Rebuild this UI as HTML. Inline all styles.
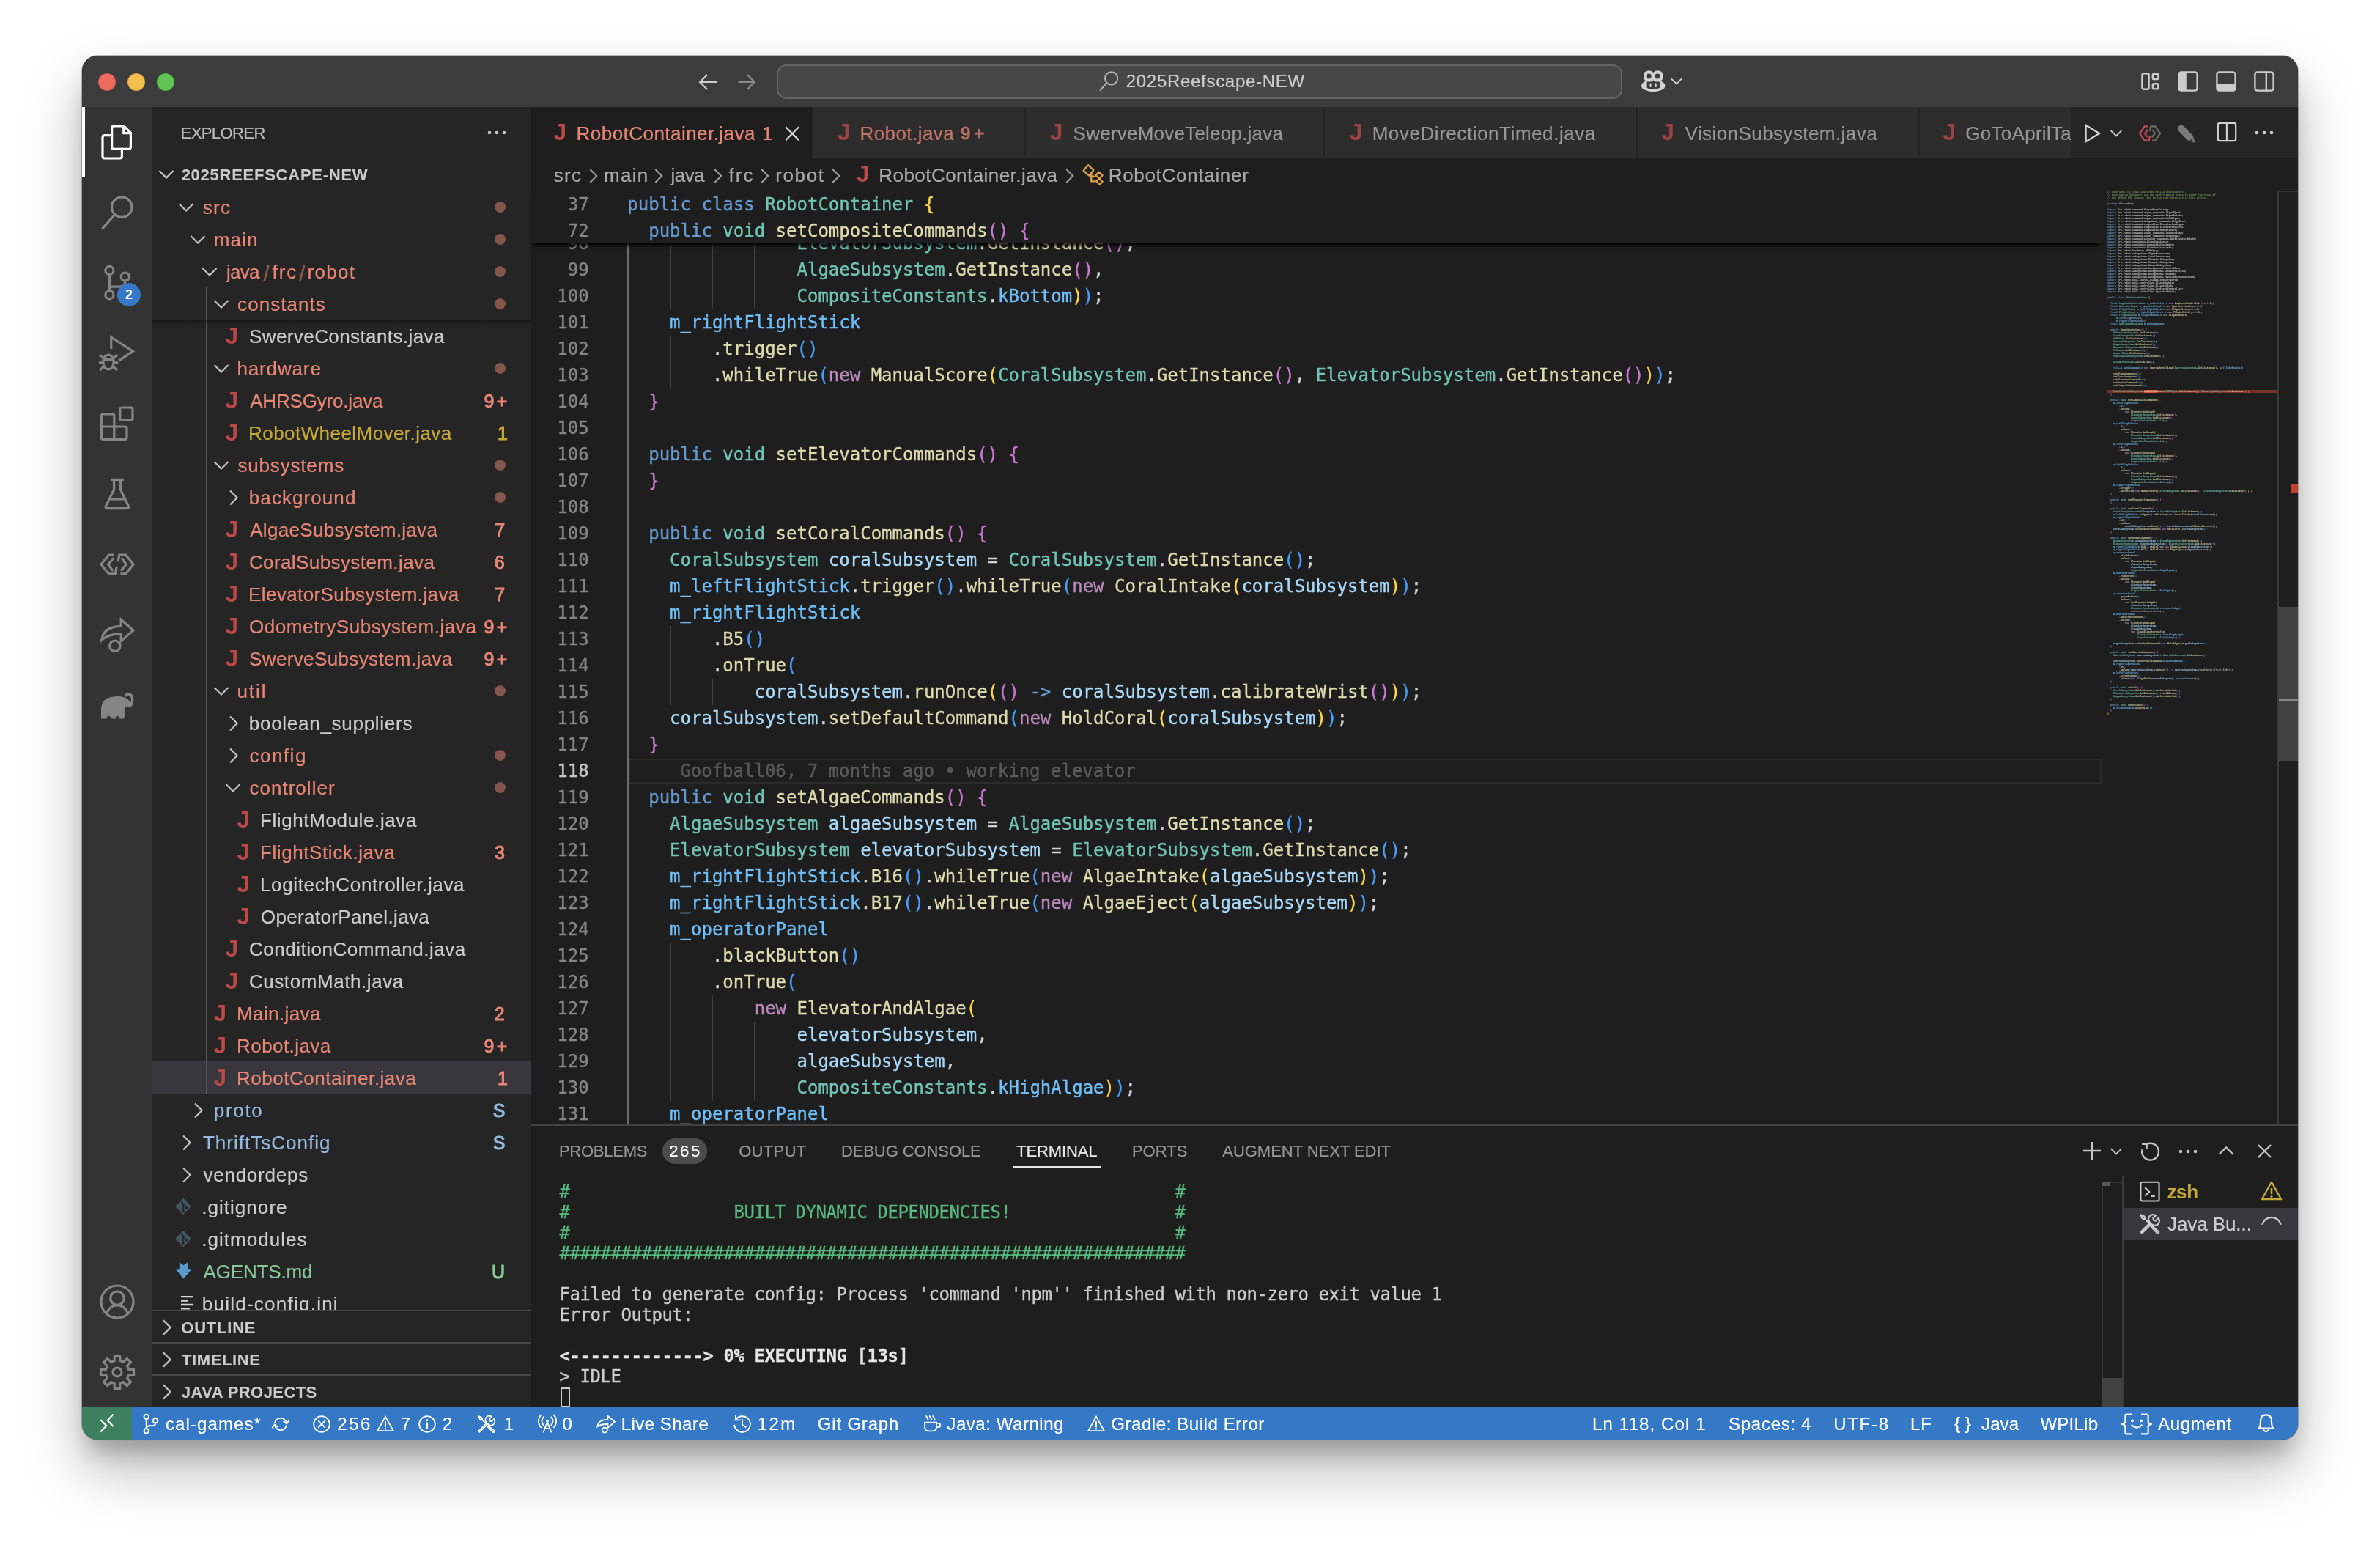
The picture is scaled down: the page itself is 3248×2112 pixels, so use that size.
<!DOCTYPE html>
<html><head><meta charset="utf-8"><title>2025Reefscape-NEW</title>
<style>
html,body{margin:0;padding:0;background:#fff}
body{width:3248px;height:2112px;overflow:hidden;position:relative;font-family:'Liberation Sans',sans-serif;-webkit-font-smoothing:antialiased}
#win{position:absolute;left:112px;top:76px;width:3024px;height:1888px;border-radius:21px;overflow:hidden;background:#1e1e1e}
#shadow{position:absolute;left:112px;top:76px;width:3024px;height:1888px;border-radius:21px;box-shadow:0 0 0 1px rgba(0,0,0,0.25),0 40px 80px rgba(0,0,0,0.28),0 24px 30px -8px rgba(0,0,0,0.22)}
#in{position:absolute;left:-112px;top:-76px;width:3248px;height:2112px;will-change:transform}
svg{display:block}
</style></head><body>
<div id="shadow"></div>
<div id="win"><div id="in">
<div style="position:absolute;left:112.00px;top:76.00px;width:3024.00px;height:70.00px;background:#3c3c3c;"></div>
<div style="position:absolute;left:134px;top:100px;width:24px;height:24px;border-radius:50%;background:#ec6a5e;box-shadow:inset 0 0 0 1px rgba(0,0,0,0.12)"></div>
<div style="position:absolute;left:174px;top:100px;width:24px;height:24px;border-radius:50%;background:#f4bf4f;box-shadow:inset 0 0 0 1px rgba(0,0,0,0.12)"></div>
<div style="position:absolute;left:214px;top:100px;width:24px;height:24px;border-radius:50%;background:#61c554;box-shadow:inset 0 0 0 1px rgba(0,0,0,0.12)"></div>
<svg style="position:absolute;left:950.00px;top:96.00px;overflow:visible;" width="32.00" height="32.00" viewBox="0 0 16 16" fill="none"><path d="M14 8 H2.6 M7.2 3.4 L2.6 8 L7.2 12.6" stroke="#cccccc" stroke-width="1.1" stroke-linecap="square" stroke-linejoin="miter" fill="none" /></svg>
<svg style="position:absolute;left:1002.60px;top:96.00px;overflow:visible;" width="32.00" height="32.00" viewBox="0 0 16 16" fill="none"><path d="M2.8 8 H13.4 M8.8 3.4 L13.4 8 L8.8 12.6" stroke="#8c8c8c" stroke-width="1.1" stroke-linecap="square" stroke-linejoin="miter" fill="none" /></svg>
<div style="position:absolute;left:1060px;top:87.5px;width:1154px;height:47px;box-sizing:border-box;border:2px solid #646464;border-radius:13px;background:#474747"></div>
<svg style="position:absolute;left:1498.00px;top:96.00px;overflow:visible;" width="30.00" height="30.00" viewBox="0 0 16 16" fill="none"><circle cx="9.9" cy="5.8" r="4.6" stroke="#b8b8b8" stroke-width="1.0" fill="none"/><path d="M6.65 9.05 L1.6 14.7" stroke="#b8b8b8" stroke-width="1.0" fill="none"/></svg>
<div style="position:absolute;left:1536.79px;top:93.00px;height:36px;line-height:36px;font:400 24px/36px 'Liberation Sans',sans-serif;letter-spacing:0.698px;color:#cccccc;white-space:pre;-webkit-text-stroke:0.22px;">2025Reefscape-NEW</div>
<svg style="position:absolute;left:2239.5px;top:95px" width="33" height="32" viewBox="0 0 33 32"><ellipse cx="16.2" cy="22" rx="16.2" ry="8.3" fill="#d4d4d4"/><rect x="3.4" y="1.6" width="13.6" height="14.6" rx="5.4" fill="#d4d4d4"/><rect x="15.6" y="1.6" width="13.6" height="14.6" rx="5.4" fill="#d4d4d4"/><rect x="6.8" y="5.4" width="6.8" height="7" rx="3" fill="#3c3c3c"/><rect x="18.6" y="5.4" width="6.8" height="7" rx="3" fill="#3c3c3c"/><path d="M6.6 16.4 H13.4 L16.2 14.6 L19 16.4 H25.8 V24.4 Q16.2 29.6 6.6 24.4 Z" fill="#3c3c3c"/><rect x="11.4" y="18.6" width="2.2" height="5.4" rx="1.1" fill="#d4d4d4"/><rect x="18.6" y="18.6" width="2.2" height="5.4" rx="1.1" fill="#d4d4d4"/></svg>
<svg style="position:absolute;left:2275.50px;top:99.00px;overflow:visible;" width="24.00" height="24.00" viewBox="0 0 16 16" fill="none"><path d="M3.6 5.9 L8 10.3 L12.4 5.9" stroke="#cccccc" stroke-width="1.3" stroke-linecap="square" stroke-linejoin="miter" fill="none" /></svg>
<svg style="position:absolute;left:2919.00px;top:95.00px;overflow:visible;" width="32.00" height="32.00" viewBox="0 0 16 16" fill="none"><rect x="2.2" y="2.6" width="4.6" height="10.8" rx="1" stroke="#cccccc" stroke-width="1.2" stroke-linecap="square" stroke-linejoin="miter" fill="none" /><rect x="9.4" y="2.9" width="3.8" height="3.6" rx="0.8" stroke="#cccccc" stroke-width="1.2" stroke-linecap="square" stroke-linejoin="miter" fill="none" /><rect x="9.4" y="9.6" width="3.8" height="3.6" rx="0.8" stroke="#cccccc" stroke-width="1.2" stroke-linecap="square" stroke-linejoin="miter" fill="none" /></svg>
<svg style="position:absolute;left:2970.00px;top:95.00px;overflow:visible;" width="32.00" height="32.00" viewBox="0 0 16 16" fill="none"><rect x="1.7" y="1.7" width="12.6" height="12.6" rx="1.6" stroke="#cccccc" stroke-width="1.2" stroke-linecap="square" stroke-linejoin="miter" fill="none" /><path d="M1.7 3.3 Q1.7 1.7 3.3 1.7 H6.9 V14.3 H3.3 Q1.7 14.3 1.7 12.7 Z" fill="#cccccc"/></svg>
<svg style="position:absolute;left:3022.00px;top:95.00px;overflow:visible;" width="32.00" height="32.00" viewBox="0 0 16 16" fill="none"><rect x="1.7" y="1.7" width="12.6" height="12.6" rx="1.6" stroke="#cccccc" stroke-width="1.2" stroke-linecap="square" stroke-linejoin="miter" fill="none" /><path d="M1.7 9.6 H14.3 V12.7 Q14.3 14.3 12.7 14.3 H3.3 Q1.7 14.3 1.7 12.7 Z" fill="#cccccc"/></svg>
<svg style="position:absolute;left:3074.00px;top:95.00px;overflow:visible;" width="32.00" height="32.00" viewBox="0 0 16 16" fill="none"><rect x="1.7" y="1.7" width="12.6" height="12.6" rx="1.6" stroke="#cccccc" stroke-width="1.2" stroke-linecap="square" stroke-linejoin="miter" fill="none" /><path d="M9.4 1.7 V14.3" stroke="#cccccc" stroke-width="1.2" stroke-linecap="square" stroke-linejoin="miter" fill="none" /></svg>
<div style="position:absolute;left:112.00px;top:146.00px;width:96.00px;height:1774.00px;background:#333333;"></div>
<div style="position:absolute;left:112.00px;top:146.00px;width:4.00px;height:96.00px;background:#ffffff;"></div>
<svg style="position:absolute;left:136.00px;top:170.00px;overflow:visible;" width="48.00" height="48.00" viewBox="0 0 24 24" fill="none"><path d="M8.3 7.3 H3.4 Q2 7.3 2 8.7 V21.6 Q2 23 3.4 23 H13.8 Q15.2 23 15.2 21.6 V16.7" stroke="#ffffff" stroke-width="1.6" stroke-linecap="square" stroke-linejoin="miter" fill="none" stroke-linejoin="round"/><path d="M8.3 15.3 V2.4 Q8.3 1 9.7 1 H16.6 L21.2 5.6 V15.3 Q21.2 16.7 19.8 16.7 H9.7 Q8.3 16.7 8.3 15.3 Z" stroke="#ffffff" stroke-width="1.6" stroke-linecap="square" stroke-linejoin="miter" fill="none" stroke-linejoin="round"/><path d="M16.4 1.2 V5.8 H21" stroke="#ffffff" stroke-width="1.6" stroke-linecap="square" stroke-linejoin="miter" fill="none" /></svg>
<svg style="position:absolute;left:136.00px;top:266.00px;overflow:visible;" width="48.00" height="48.00" viewBox="0 0 24 24" fill="none"><circle cx="15.1" cy="8.3" r="6.9" stroke="#858585" stroke-width="1.6" stroke-linecap="square" stroke-linejoin="miter" fill="none" /><path d="M10.4 13.3 L2.2 22.6" stroke="#858585" stroke-width="1.6" stroke-linecap="square" stroke-linejoin="miter" fill="none" /></svg>
<svg style="position:absolute;left:136.00px;top:362.00px;overflow:visible;" width="48.00" height="48.00" viewBox="0 0 24 24" fill="none"><circle cx="6.7" cy="3.5" r="2.8" stroke="#858585" stroke-width="1.6" stroke-linecap="square" stroke-linejoin="miter" fill="none" /><circle cx="17.4" cy="7.8" r="2.8" stroke="#858585" stroke-width="1.6" stroke-linecap="square" stroke-linejoin="miter" fill="none" /><circle cx="6.7" cy="20.1" r="2.8" stroke="#858585" stroke-width="1.6" stroke-linecap="square" stroke-linejoin="miter" fill="none" /><path d="M6.7 6.3 V17.3 M17.4 10.6 Q17.4 14.6 13.4 14.6 H9 Q6.7 14.6 6.7 16.8" stroke="#858585" stroke-width="1.6" stroke-linecap="square" stroke-linejoin="miter" fill="none" /></svg>
<svg style="position:absolute;left:136.00px;top:458.00px;overflow:visible;" width="48.00" height="48.00" viewBox="0 0 24 24" fill="none"><path d="M7.9 8.2 V1.1 L22.7 10.6 L13.8 16.6" stroke="#858585" stroke-width="1.6" stroke-linecap="square" stroke-linejoin="miter" fill="none" /><ellipse cx="6" cy="18" rx="3.6" ry="4.9" stroke="#858585" stroke-width="1.6" stroke-linecap="square" stroke-linejoin="miter" fill="none" /><path d="M2.8 16.2 H9.2 M0.2 18.4 H2.4 M9.6 18.4 H11.8 M0.6 13.6 L2.8 15.4 M11.4 13.6 L9.2 15.4 M0.6 23 L2.9 21 M11.4 23 L9.1 21" stroke="#858585" stroke-width="1.6" stroke-linecap="square" stroke-linejoin="miter" fill="none" /></svg>
<svg style="position:absolute;left:136.00px;top:554.00px;overflow:visible;" width="48.00" height="48.00" viewBox="0 0 24 24" fill="none"><g transform="translate(-1.1,-1.9)"><path d="M2.3 8.6 Q2.3 7.4 3.5 7.4 H9.8 Q11 7.4 11 8.6 V15.9 H18.4 Q19.6 15.9 19.6 17.1 V23.4 Q19.6 24.6 18.4 24.6 H3.5 Q2.3 24.6 2.3 23.4 Z M2.3 15.9 H11 V24.6" stroke="#858585" stroke-width="1.6" stroke-linecap="square" stroke-linejoin="miter" fill="none" /><rect x="15" y="2.9" width="8.6" height="8.6" rx="1.2" stroke="#858585" stroke-width="1.6" stroke-linecap="square" stroke-linejoin="miter" fill="none" /></g></svg>
<svg style="position:absolute;left:136.00px;top:650.00px;overflow:visible;" width="48.00" height="48.00" viewBox="0 0 24 24" fill="none"><path d="M8.4 2.2 H15.6 M9.8 2.2 V9 L4.2 20.4 Q3.7 21.8 5.2 21.8 H18.8 Q20.3 21.8 19.8 20.4 L14.2 9 V2.2 M6.8 15.4 H17.2" stroke="#858585" stroke-width="1.6" stroke-linecap="square" stroke-linejoin="miter" fill="none" /></svg>
<svg style="position:absolute;left:136.00px;top:746.00px;overflow:visible;" width="48.00" height="48.00" viewBox="0 0 24 24" fill="none"><path d="M9 5.6 H6.2 L1 12 L6.2 18.4 H10.6 L11.4 14.6" stroke="#858585" stroke-width="1.6" stroke-linecap="square" stroke-linejoin="miter" fill="none" /><path d="M9 8.2 L5.8 12 L8.6 15.8" stroke="#858585" stroke-width="1.6" stroke-linecap="square" stroke-linejoin="miter" fill="none" /><path d="M15 18.4 H17.8 L23 12 L17.8 5.6 H13.4 L12.6 9.4" stroke="#858585" stroke-width="1.6" stroke-linecap="square" stroke-linejoin="miter" fill="none" /><path d="M15 15.8 L18.2 12 L15.4 8.2" stroke="#858585" stroke-width="1.6" stroke-linecap="square" stroke-linejoin="miter" fill="none" /></svg>
<svg style="position:absolute;left:136.00px;top:842.00px;overflow:visible;" width="48.00" height="48.00" viewBox="0 0 24 24" fill="none"><path d="M1.4 15.6 Q2.6 6.4 14.6 6.2 V1.6 L23 9 L14.6 16.2 V11.6 Q6 11.2 1.4 15.6 Z" stroke="#858585" stroke-width="1.6" stroke-linecap="square" stroke-linejoin="miter" fill="none" stroke-linejoin="round"/><circle cx="10.4" cy="19.6" r="3.6" stroke="#858585" stroke-width="1.6" stroke-linecap="square" stroke-linejoin="miter" fill="none" /></svg>
<svg style="position:absolute;left:136.00px;top:938.00px;overflow:visible;" width="48.00" height="48.00" viewBox="0 0 24 24" fill="none"><path d="M1 21.2 V15 Q1 7.4 8.6 6.4 Q13 5.6 16.4 6.6 Q19.4 7.4 20.6 9.6 Q21.6 11 21.4 8 Q21.4 5.6 19.6 5.4 Q18.4 5.4 18.6 6.4 L17.2 6.2 Q17 3.6 19.8 3.6 Q23.4 3.8 23.2 8.6 Q23 13.6 19.8 13.4 Q18.2 13.4 17.6 12.6 Q17.6 17 16.6 21.2 H13.6 Q13.6 19.4 12.2 19.4 Q10.8 19.4 10.8 21.2 H7.6 Q7.6 19.4 6.2 19.4 Q4.8 19.4 4.8 21.2 Z" fill="#858585"/></svg>
<svg style="position:absolute;left:136.00px;top:1752.00px;overflow:visible;" width="48.00" height="48.00" viewBox="0 0 24 24" fill="none"><circle cx="12" cy="12" r="11" stroke="#858585" stroke-width="1.6" stroke-linecap="square" stroke-linejoin="miter" fill="none" /><circle cx="12" cy="9.6" r="4.6" stroke="#858585" stroke-width="1.6" stroke-linecap="square" stroke-linejoin="miter" fill="none" /><path d="M4.9 19.6 Q7 14.4 12 14.4 Q17 14.4 19.1 19.6" stroke="#858585" stroke-width="1.6" stroke-linecap="square" stroke-linejoin="miter" fill="none" /></svg>
<svg style="position:absolute;left:136.00px;top:1848.00px;overflow:visible;" width="48.00" height="48.00" viewBox="0 0 24 24" fill="none"><path d="M10.18 0.75 L13.82 0.75 L13.94 4.24 L16.12 5.14 L18.67 2.76 L21.24 5.33 L18.86 7.88 L19.76 10.06 L23.25 10.18 L23.25 13.82 L19.76 13.94 L18.86 16.12 L21.24 18.67 L18.67 21.24 L16.12 18.86 L13.94 19.76 L13.82 23.25 L10.18 23.25 L10.06 19.76 L7.88 18.86 L5.33 21.24 L2.76 18.67 L5.14 16.12 L4.24 13.94 L0.75 13.82 L0.75 10.18 L4.24 10.06 L5.14 7.88 L2.76 5.33 L5.33 2.76 L7.88 5.14 L10.06 4.24 Z" stroke="#858585" stroke-width="1.6" stroke-linecap="square" stroke-linejoin="miter" fill="none" stroke-linejoin="round"/><circle cx="12" cy="12" r="3" stroke="#858585" stroke-width="1.6" stroke-linecap="square" stroke-linejoin="miter" fill="none" /></svg>
<div style="position:absolute;left:160px;top:386px;width:32px;height:32px;border-radius:16px;background:#3478c6;color:#fff;font:700 18px/32px 'Liberation Sans',sans-serif;text-align:center">2</div>
<div style="position:absolute;left:208.00px;top:146.00px;width:516.00px;height:1774.00px;background:#252526;"></div>
<div style="position:absolute;left:246.60px;top:164.50px;height:33px;line-height:33px;font:400 22px/33px 'Liberation Sans',sans-serif;letter-spacing:-0.585px;color:#bbbbbb;white-space:pre;-webkit-text-stroke:0.22px;">EXPLORER</div>
<svg style="position:absolute;left:662.00px;top:165.00px;overflow:visible;" width="32.00" height="32.00" viewBox="0 0 16 16" fill="none"><circle cx="3" cy="8" r="1.15" fill="#c5c5c5"/><circle cx="8" cy="8" r="1.15" fill="#c5c5c5"/><circle cx="13" cy="8" r="1.15" fill="#c5c5c5"/></svg>
<svg style="position:absolute;left:211.00px;top:222.00px;overflow:visible;" width="32.00" height="32.00" viewBox="0 0 16 16" fill="none"><path d="M3.6 5.9 L8 10.3 L12.4 5.9" stroke="#c5c5c5" stroke-width="1.15" stroke-linecap="square" stroke-linejoin="miter" fill="none" /></svg>
<div style="position:absolute;left:247.64px;top:221.50px;height:33px;line-height:33px;font:700 22px/33px 'Liberation Sans',sans-serif;letter-spacing:0.745px;color:#cccccc;white-space:pre;-webkit-text-stroke:0.1px;">2025REEFSCAPE-NEW</div>
<div style="position:absolute;left:208px;top:260px;width:516px;height:1528px;overflow:hidden"><div style="position:absolute;left:-208px;top:-260px">
<div style="position:absolute;left:208.00px;top:1448.00px;width:516.00px;height:44.00px;background:#37373d;"></div>
<div style="position:absolute;left:280.50px;top:392.00px;width:2.00px;height:1100.00px;background:#585858;"></div>
<div style="position:absolute;left:276.78px;top:264.30px;height:39px;line-height:39px;font:400 26px/39px 'Liberation Sans',sans-serif;letter-spacing:1.275px;color:#e88675;white-space:pre;-webkit-text-stroke:0.22px;">src</div>
<svg style="position:absolute;left:238.30px;top:266.70px;overflow:visible;" width="32.00" height="32.00" viewBox="0 0 16 16" fill="none"><path d="M3.6 5.9 L8 10.3 L12.4 5.9" stroke="#c5c5c5" stroke-width="1.05" stroke-linecap="square" stroke-linejoin="miter" fill="none" /></svg>
<div style="position:absolute;left:674.5px;top:275.0px;width:15px;height:15px;border-radius:50%;background:#e88675;opacity:0.5"></div>
<div style="position:absolute;left:291.67px;top:308.30px;height:39px;line-height:39px;font:400 26px/39px 'Liberation Sans',sans-serif;letter-spacing:1.187px;color:#e88675;white-space:pre;-webkit-text-stroke:0.22px;">main</div>
<svg style="position:absolute;left:254.20px;top:310.70px;overflow:visible;" width="32.00" height="32.00" viewBox="0 0 16 16" fill="none"><path d="M3.6 5.9 L8 10.3 L12.4 5.9" stroke="#c5c5c5" stroke-width="1.05" stroke-linecap="square" stroke-linejoin="miter" fill="none" /></svg>
<div style="position:absolute;left:674.5px;top:319.0px;width:15px;height:15px;border-radius:50%;background:#e88675;opacity:0.5"></div>
<div style="position:absolute;left:309.03px;top:352.30px;height:39px;line-height:39px;font:400 26px/39px 'Liberation Sans',sans-serif;letter-spacing:-0.710px;color:#e88675;white-space:pre;-webkit-text-stroke:0.22px;">java</div>
<div style="position:absolute;left:359.20px;top:350.80px;height:46px;line-height:46px;font:400 31px/46px 'Liberation Sans',sans-serif;letter-spacing:0.487px;color:#e88675;white-space:pre;-webkit-text-stroke:0.22px;opacity:0.55;">/</div>
<div style="position:absolute;left:371.43px;top:352.30px;height:39px;line-height:39px;font:400 26px/39px 'Liberation Sans',sans-serif;letter-spacing:1.986px;color:#e88675;white-space:pre;-webkit-text-stroke:0.22px;">frc</div>
<div style="position:absolute;left:408.10px;top:350.80px;height:46px;line-height:46px;font:400 31px/46px 'Liberation Sans',sans-serif;letter-spacing:-0.013px;color:#e88675;white-space:pre;-webkit-text-stroke:0.22px;opacity:0.55;">/</div>
<div style="position:absolute;left:419.57px;top:352.30px;height:39px;line-height:39px;font:400 26px/39px 'Liberation Sans',sans-serif;letter-spacing:1.289px;color:#e88675;white-space:pre;-webkit-text-stroke:0.22px;">robot</div>
<svg style="position:absolute;left:269.70px;top:354.70px;overflow:visible;" width="32.00" height="32.00" viewBox="0 0 16 16" fill="none"><path d="M3.6 5.9 L8 10.3 L12.4 5.9" stroke="#c5c5c5" stroke-width="1.05" stroke-linecap="square" stroke-linejoin="miter" fill="none" /></svg>
<div style="position:absolute;left:674.5px;top:363.0px;width:15px;height:15px;border-radius:50%;background:#e88675;opacity:0.5"></div>
<div style="position:absolute;left:324.10px;top:396.30px;height:39px;line-height:39px;font:400 26px/39px 'Liberation Sans',sans-serif;letter-spacing:1.057px;color:#e88675;white-space:pre;-webkit-text-stroke:0.22px;">constants</div>
<svg style="position:absolute;left:286.00px;top:398.70px;overflow:visible;" width="32.00" height="32.00" viewBox="0 0 16 16" fill="none"><path d="M3.6 5.9 L8 10.3 L12.4 5.9" stroke="#c5c5c5" stroke-width="1.05" stroke-linecap="square" stroke-linejoin="miter" fill="none" /></svg>
<div style="position:absolute;left:674.5px;top:407.0px;width:15px;height:15px;border-radius:50%;background:#e88675;opacity:0.5"></div>
<div style="position:absolute;left:340.02px;top:440.30px;height:39px;line-height:39px;font:400 26px/39px 'Liberation Sans',sans-serif;letter-spacing:0.405px;color:#cccccc;white-space:pre;-webkit-text-stroke:0.22px;">SwerveConstants.java</div>
<div style="position:absolute;left:307.63px;top:435.60px;height:46px;line-height:46px;font:700 31px/46px 'Liberation Sans',sans-serif;letter-spacing:0.648px;color:#bc4949;white-space:pre;-webkit-text-stroke:0.1px;">J</div>
<div style="position:absolute;left:323.40px;top:484.30px;height:39px;line-height:39px;font:400 26px/39px 'Liberation Sans',sans-serif;letter-spacing:0.866px;color:#e88675;white-space:pre;-webkit-text-stroke:0.22px;">hardware</div>
<svg style="position:absolute;left:286.00px;top:486.70px;overflow:visible;" width="32.00" height="32.00" viewBox="0 0 16 16" fill="none"><path d="M3.6 5.9 L8 10.3 L12.4 5.9" stroke="#c5c5c5" stroke-width="1.05" stroke-linecap="square" stroke-linejoin="miter" fill="none" /></svg>
<div style="position:absolute;left:674.5px;top:495.0px;width:15px;height:15px;border-radius:50%;background:#e88675;opacity:0.5"></div>
<div style="position:absolute;left:341.15px;top:528.30px;height:39px;line-height:39px;font:400 26px/39px 'Liberation Sans',sans-serif;letter-spacing:-0.179px;color:#e88675;white-space:pre;-webkit-text-stroke:0.22px;">AHRSGyro.java</div>
<div style="position:absolute;left:307.63px;top:523.60px;height:46px;line-height:46px;font:700 31px/46px 'Liberation Sans',sans-serif;letter-spacing:0.648px;color:#bc4949;white-space:pre;-webkit-text-stroke:0.1px;">J</div>
<div style="position:absolute;left:660.43px;top:527.90px;height:38px;line-height:38px;font:400 25px/38px 'Liberation Sans',sans-serif;letter-spacing:3.301px;color:#e88675;white-space:pre;-webkit-text-stroke:1.0px;">9+</div>
<div style="position:absolute;left:339.07px;top:572.30px;height:39px;line-height:39px;font:400 26px/39px 'Liberation Sans',sans-serif;letter-spacing:0.439px;color:#c6a837;white-space:pre;-webkit-text-stroke:0.22px;">RobotWheelMover.java</div>
<div style="position:absolute;left:307.63px;top:567.60px;height:46px;line-height:46px;font:700 31px/46px 'Liberation Sans',sans-serif;letter-spacing:0.648px;color:#bc4949;white-space:pre;-webkit-text-stroke:0.1px;">J</div>
<div style="position:absolute;left:679.10px;top:571.90px;height:38px;line-height:38px;font:400 25px/38px 'Liberation Sans',sans-serif;letter-spacing:-0.779px;color:#c6a837;white-space:pre;-webkit-text-stroke:1.0px;">1</div>
<div style="position:absolute;left:324.48px;top:616.30px;height:39px;line-height:39px;font:400 26px/39px 'Liberation Sans',sans-serif;letter-spacing:0.822px;color:#e88675;white-space:pre;-webkit-text-stroke:0.22px;">subsystems</div>
<svg style="position:absolute;left:286.00px;top:618.70px;overflow:visible;" width="32.00" height="32.00" viewBox="0 0 16 16" fill="none"><path d="M3.6 5.9 L8 10.3 L12.4 5.9" stroke="#c5c5c5" stroke-width="1.05" stroke-linecap="square" stroke-linejoin="miter" fill="none" /></svg>
<div style="position:absolute;left:674.5px;top:627.0px;width:15px;height:15px;border-radius:50%;background:#e88675;opacity:0.5"></div>
<div style="position:absolute;left:339.82px;top:660.30px;height:39px;line-height:39px;font:400 26px/39px 'Liberation Sans',sans-serif;letter-spacing:1.075px;color:#e88675;white-space:pre;-webkit-text-stroke:0.22px;">background</div>
<svg style="position:absolute;left:302.60px;top:662.60px;overflow:visible;" width="32.00" height="32.00" viewBox="0 0 16 16" fill="none"><path d="M5.9 3.6 L10.3 8 L5.9 12.4" stroke="#c5c5c5" stroke-width="1.05" stroke-linecap="square" stroke-linejoin="miter" fill="none" /></svg>
<div style="position:absolute;left:674.5px;top:671.0px;width:15px;height:15px;border-radius:50%;background:#e88675;opacity:0.5"></div>
<div style="position:absolute;left:341.15px;top:704.30px;height:39px;line-height:39px;font:400 26px/39px 'Liberation Sans',sans-serif;letter-spacing:0.318px;color:#e88675;white-space:pre;-webkit-text-stroke:0.22px;">AlgaeSubsystem.java</div>
<div style="position:absolute;left:307.63px;top:699.60px;height:46px;line-height:46px;font:700 31px/46px 'Liberation Sans',sans-serif;letter-spacing:0.648px;color:#bc4949;white-space:pre;-webkit-text-stroke:0.1px;">J</div>
<div style="position:absolute;left:675.22px;top:703.90px;height:38px;line-height:38px;font:400 25px/38px 'Liberation Sans',sans-serif;letter-spacing:3.135px;color:#e88675;white-space:pre;-webkit-text-stroke:1.0px;">7</div>
<div style="position:absolute;left:339.88px;top:748.30px;height:39px;line-height:39px;font:400 26px/39px 'Liberation Sans',sans-serif;letter-spacing:0.409px;color:#e88675;white-space:pre;-webkit-text-stroke:0.22px;">CoralSubsystem.java</div>
<div style="position:absolute;left:307.63px;top:743.60px;height:46px;line-height:46px;font:700 31px/46px 'Liberation Sans',sans-serif;letter-spacing:0.648px;color:#bc4949;white-space:pre;-webkit-text-stroke:0.1px;">J</div>
<div style="position:absolute;left:674.73px;top:747.90px;height:38px;line-height:38px;font:400 25px/38px 'Liberation Sans',sans-serif;letter-spacing:3.464px;color:#e88675;white-space:pre;-webkit-text-stroke:1.0px;">6</div>
<div style="position:absolute;left:339.07px;top:792.30px;height:39px;line-height:39px;font:400 26px/39px 'Liberation Sans',sans-serif;letter-spacing:0.397px;color:#e88675;white-space:pre;-webkit-text-stroke:0.22px;">ElevatorSubsystem.java</div>
<div style="position:absolute;left:307.63px;top:787.60px;height:46px;line-height:46px;font:700 31px/46px 'Liberation Sans',sans-serif;letter-spacing:0.648px;color:#bc4949;white-space:pre;-webkit-text-stroke:0.1px;">J</div>
<div style="position:absolute;left:675.22px;top:791.90px;height:38px;line-height:38px;font:400 25px/38px 'Liberation Sans',sans-serif;letter-spacing:3.135px;color:#e88675;white-space:pre;-webkit-text-stroke:1.0px;">7</div>
<div style="position:absolute;left:339.97px;top:836.30px;height:39px;line-height:39px;font:400 26px/39px 'Liberation Sans',sans-serif;letter-spacing:0.584px;color:#e88675;white-space:pre;-webkit-text-stroke:0.22px;">OdometrySubsystem.java</div>
<div style="position:absolute;left:307.63px;top:831.60px;height:46px;line-height:46px;font:700 31px/46px 'Liberation Sans',sans-serif;letter-spacing:0.648px;color:#bc4949;white-space:pre;-webkit-text-stroke:0.1px;">J</div>
<div style="position:absolute;left:660.43px;top:835.90px;height:38px;line-height:38px;font:400 25px/38px 'Liberation Sans',sans-serif;letter-spacing:3.301px;color:#e88675;white-space:pre;-webkit-text-stroke:1.0px;">9+</div>
<div style="position:absolute;left:340.02px;top:880.30px;height:39px;line-height:39px;font:400 26px/39px 'Liberation Sans',sans-serif;letter-spacing:0.372px;color:#e88675;white-space:pre;-webkit-text-stroke:0.22px;">SwerveSubsystem.java</div>
<div style="position:absolute;left:307.63px;top:875.60px;height:46px;line-height:46px;font:700 31px/46px 'Liberation Sans',sans-serif;letter-spacing:0.648px;color:#bc4949;white-space:pre;-webkit-text-stroke:0.1px;">J</div>
<div style="position:absolute;left:660.43px;top:879.90px;height:38px;line-height:38px;font:400 25px/38px 'Liberation Sans',sans-serif;letter-spacing:3.301px;color:#e88675;white-space:pre;-webkit-text-stroke:1.0px;">9+</div>
<div style="position:absolute;left:323.51px;top:924.30px;height:39px;line-height:39px;font:400 26px/39px 'Liberation Sans',sans-serif;letter-spacing:1.897px;color:#e88675;white-space:pre;-webkit-text-stroke:0.22px;">util</div>
<svg style="position:absolute;left:286.00px;top:926.70px;overflow:visible;" width="32.00" height="32.00" viewBox="0 0 16 16" fill="none"><path d="M3.6 5.9 L8 10.3 L12.4 5.9" stroke="#c5c5c5" stroke-width="1.05" stroke-linecap="square" stroke-linejoin="miter" fill="none" /></svg>
<div style="position:absolute;left:674.5px;top:935.0px;width:15px;height:15px;border-radius:50%;background:#e88675;opacity:0.5"></div>
<div style="position:absolute;left:339.82px;top:968.30px;height:39px;line-height:39px;font:400 26px/39px 'Liberation Sans',sans-serif;letter-spacing:0.723px;color:#cccccc;white-space:pre;-webkit-text-stroke:0.22px;">boolean_suppliers</div>
<svg style="position:absolute;left:302.60px;top:970.60px;overflow:visible;" width="32.00" height="32.00" viewBox="0 0 16 16" fill="none"><path d="M5.9 3.6 L10.3 8 L5.9 12.4" stroke="#c5c5c5" stroke-width="1.05" stroke-linecap="square" stroke-linejoin="miter" fill="none" /></svg>
<div style="position:absolute;left:340.40px;top:1012.30px;height:39px;line-height:39px;font:400 26px/39px 'Liberation Sans',sans-serif;letter-spacing:1.520px;color:#e88675;white-space:pre;-webkit-text-stroke:0.22px;">config</div>
<svg style="position:absolute;left:302.60px;top:1014.60px;overflow:visible;" width="32.00" height="32.00" viewBox="0 0 16 16" fill="none"><path d="M5.9 3.6 L10.3 8 L5.9 12.4" stroke="#c5c5c5" stroke-width="1.05" stroke-linecap="square" stroke-linejoin="miter" fill="none" /></svg>
<div style="position:absolute;left:674.5px;top:1023.0px;width:15px;height:15px;border-radius:50%;background:#e88675;opacity:0.5"></div>
<div style="position:absolute;left:340.40px;top:1056.30px;height:39px;line-height:39px;font:400 26px/39px 'Liberation Sans',sans-serif;letter-spacing:1.034px;color:#e88675;white-space:pre;-webkit-text-stroke:0.22px;">controller</div>
<svg style="position:absolute;left:302.30px;top:1058.70px;overflow:visible;" width="32.00" height="32.00" viewBox="0 0 16 16" fill="none"><path d="M3.6 5.9 L8 10.3 L12.4 5.9" stroke="#c5c5c5" stroke-width="1.05" stroke-linecap="square" stroke-linejoin="miter" fill="none" /></svg>
<div style="position:absolute;left:674.5px;top:1067.0px;width:15px;height:15px;border-radius:50%;background:#e88675;opacity:0.5"></div>
<div style="position:absolute;left:354.97px;top:1100.30px;height:39px;line-height:39px;font:400 26px/39px 'Liberation Sans',sans-serif;letter-spacing:0.604px;color:#cccccc;white-space:pre;-webkit-text-stroke:0.22px;">FlightModule.java</div>
<div style="position:absolute;left:323.53px;top:1095.60px;height:46px;line-height:46px;font:700 31px/46px 'Liberation Sans',sans-serif;letter-spacing:0.648px;color:#bc4949;white-space:pre;-webkit-text-stroke:0.1px;">J</div>
<div style="position:absolute;left:354.97px;top:1144.30px;height:39px;line-height:39px;font:400 26px/39px 'Liberation Sans',sans-serif;letter-spacing:0.593px;color:#e88675;white-space:pre;-webkit-text-stroke:0.22px;">FlightStick.java</div>
<div style="position:absolute;left:323.53px;top:1139.60px;height:46px;line-height:46px;font:700 31px/46px 'Liberation Sans',sans-serif;letter-spacing:0.648px;color:#bc4949;white-space:pre;-webkit-text-stroke:0.1px;">J</div>
<div style="position:absolute;left:675.05px;top:1143.90px;height:38px;line-height:38px;font:400 25px/38px 'Liberation Sans',sans-serif;letter-spacing:3.147px;color:#e88675;white-space:pre;-webkit-text-stroke:1.0px;">3</div>
<div style="position:absolute;left:354.97px;top:1188.30px;height:39px;line-height:39px;font:400 26px/39px 'Liberation Sans',sans-serif;letter-spacing:0.638px;color:#cccccc;white-space:pre;-webkit-text-stroke:0.22px;">LogitechController.java</div>
<div style="position:absolute;left:323.53px;top:1183.60px;height:46px;line-height:46px;font:700 31px/46px 'Liberation Sans',sans-serif;letter-spacing:0.648px;color:#bc4949;white-space:pre;-webkit-text-stroke:0.1px;">J</div>
<div style="position:absolute;left:355.87px;top:1232.30px;height:39px;line-height:39px;font:400 26px/39px 'Liberation Sans',sans-serif;letter-spacing:0.348px;color:#cccccc;white-space:pre;-webkit-text-stroke:0.22px;">OperatorPanel.java</div>
<div style="position:absolute;left:323.53px;top:1227.60px;height:46px;line-height:46px;font:700 31px/46px 'Liberation Sans',sans-serif;letter-spacing:0.648px;color:#bc4949;white-space:pre;-webkit-text-stroke:0.1px;">J</div>
<div style="position:absolute;left:339.88px;top:1276.30px;height:39px;line-height:39px;font:400 26px/39px 'Liberation Sans',sans-serif;letter-spacing:0.536px;color:#cccccc;white-space:pre;-webkit-text-stroke:0.22px;">ConditionCommand.java</div>
<div style="position:absolute;left:307.63px;top:1271.60px;height:46px;line-height:46px;font:700 31px/46px 'Liberation Sans',sans-serif;letter-spacing:0.648px;color:#bc4949;white-space:pre;-webkit-text-stroke:0.1px;">J</div>
<div style="position:absolute;left:339.88px;top:1320.30px;height:39px;line-height:39px;font:400 26px/39px 'Liberation Sans',sans-serif;letter-spacing:0.580px;color:#cccccc;white-space:pre;-webkit-text-stroke:0.22px;">CustomMath.java</div>
<div style="position:absolute;left:307.63px;top:1315.60px;height:46px;line-height:46px;font:700 31px/46px 'Liberation Sans',sans-serif;letter-spacing:0.648px;color:#bc4949;white-space:pre;-webkit-text-stroke:0.1px;">J</div>
<div style="position:absolute;left:323.07px;top:1364.30px;height:39px;line-height:39px;font:400 26px/39px 'Liberation Sans',sans-serif;letter-spacing:0.382px;color:#e88675;white-space:pre;-webkit-text-stroke:0.22px;">Main.java</div>
<div style="position:absolute;left:291.63px;top:1359.60px;height:46px;line-height:46px;font:700 31px/46px 'Liberation Sans',sans-serif;letter-spacing:0.648px;color:#bc4949;white-space:pre;-webkit-text-stroke:0.1px;">J</div>
<div style="position:absolute;left:674.74px;top:1363.90px;height:38px;line-height:38px;font:400 25px/38px 'Liberation Sans',sans-serif;letter-spacing:3.611px;color:#e88675;white-space:pre;-webkit-text-stroke:1.0px;">2</div>
<div style="position:absolute;left:323.07px;top:1408.30px;height:39px;line-height:39px;font:400 26px/39px 'Liberation Sans',sans-serif;letter-spacing:0.426px;color:#e88675;white-space:pre;-webkit-text-stroke:0.22px;">Robot.java</div>
<div style="position:absolute;left:291.63px;top:1403.60px;height:46px;line-height:46px;font:700 31px/46px 'Liberation Sans',sans-serif;letter-spacing:0.648px;color:#bc4949;white-space:pre;-webkit-text-stroke:0.1px;">J</div>
<div style="position:absolute;left:660.43px;top:1407.90px;height:38px;line-height:38px;font:400 25px/38px 'Liberation Sans',sans-serif;letter-spacing:3.301px;color:#e88675;white-space:pre;-webkit-text-stroke:1.0px;">9+</div>
<div style="position:absolute;left:323.07px;top:1452.30px;height:39px;line-height:39px;font:400 26px/39px 'Liberation Sans',sans-serif;letter-spacing:0.502px;color:#e88675;white-space:pre;-webkit-text-stroke:0.22px;">RobotContainer.java</div>
<div style="position:absolute;left:291.63px;top:1447.60px;height:46px;line-height:46px;font:700 31px/46px 'Liberation Sans',sans-serif;letter-spacing:0.648px;color:#bc4949;white-space:pre;-webkit-text-stroke:0.1px;">J</div>
<div style="position:absolute;left:679.10px;top:1451.90px;height:38px;line-height:38px;font:400 25px/38px 'Liberation Sans',sans-serif;letter-spacing:-0.779px;color:#e88675;white-space:pre;-webkit-text-stroke:1.0px;">1</div>
<div style="position:absolute;left:291.72px;top:1496.30px;height:39px;line-height:39px;font:400 26px/39px 'Liberation Sans',sans-serif;letter-spacing:1.701px;color:#96b8de;white-space:pre;-webkit-text-stroke:0.22px;">proto</div>
<svg style="position:absolute;left:254.50px;top:1498.60px;overflow:visible;" width="32.00" height="32.00" viewBox="0 0 16 16" fill="none"><path d="M5.9 3.6 L10.3 8 L5.9 12.4" stroke="#c5c5c5" stroke-width="1.05" stroke-linecap="square" stroke-linejoin="miter" fill="none" /></svg>
<div style="position:absolute;left:672.86px;top:1495.90px;height:38px;line-height:38px;font:400 25px/38px 'Liberation Sans',sans-serif;letter-spacing:2.608px;color:#96b8de;white-space:pre;-webkit-text-stroke:1.0px;">S</div>
<div style="position:absolute;left:276.92px;top:1540.30px;height:39px;line-height:39px;font:400 26px/39px 'Liberation Sans',sans-serif;letter-spacing:1.022px;color:#96b8de;white-space:pre;-webkit-text-stroke:0.22px;">ThriftTsConfig</div>
<svg style="position:absolute;left:238.60px;top:1542.60px;overflow:visible;" width="32.00" height="32.00" viewBox="0 0 16 16" fill="none"><path d="M5.9 3.6 L10.3 8 L5.9 12.4" stroke="#c5c5c5" stroke-width="1.05" stroke-linecap="square" stroke-linejoin="miter" fill="none" /></svg>
<div style="position:absolute;left:672.86px;top:1539.90px;height:38px;line-height:38px;font:400 25px/38px 'Liberation Sans',sans-serif;letter-spacing:2.608px;color:#96b8de;white-space:pre;-webkit-text-stroke:1.0px;">S</div>
<div style="position:absolute;left:277.41px;top:1584.30px;height:39px;line-height:39px;font:400 26px/39px 'Liberation Sans',sans-serif;letter-spacing:0.772px;color:#cccccc;white-space:pre;-webkit-text-stroke:0.22px;">vendordeps</div>
<svg style="position:absolute;left:238.60px;top:1586.60px;overflow:visible;" width="32.00" height="32.00" viewBox="0 0 16 16" fill="none"><path d="M5.9 3.6 L10.3 8 L5.9 12.4" stroke="#c5c5c5" stroke-width="1.05" stroke-linecap="square" stroke-linejoin="miter" fill="none" /></svg>
<div style="position:absolute;left:275.13px;top:1628.30px;height:39px;line-height:39px;font:400 26px/39px 'Liberation Sans',sans-serif;letter-spacing:1.052px;color:#cccccc;white-space:pre;-webkit-text-stroke:0.22px;">.gitignore</div>
<svg style="position:absolute;left:238.3px;top:1633.9px" width="24" height="24" viewBox="0 0 24 24"><path d="M12 0.8 L23.2 12 L12 23.2 L0.8 12 Z" fill="#43545c"/><path d="M9 5 L12 8 V18 M12 9.5 L16 13.5" stroke="#252526" stroke-width="1.8" fill="none"/><circle cx="12" cy="18" r="1.8" fill="#252526"/><circle cx="16.3" cy="13.8" r="1.8" fill="#252526"/></svg>
<div style="position:absolute;left:275.13px;top:1672.30px;height:39px;line-height:39px;font:400 26px/39px 'Liberation Sans',sans-serif;letter-spacing:1.036px;color:#cccccc;white-space:pre;-webkit-text-stroke:0.22px;">.gitmodules</div>
<svg style="position:absolute;left:238.3px;top:1677.9px" width="24" height="24" viewBox="0 0 24 24"><path d="M12 0.8 L23.2 12 L12 23.2 L0.8 12 Z" fill="#43545c"/><path d="M9 5 L12 8 V18 M12 9.5 L16 13.5" stroke="#252526" stroke-width="1.8" fill="none"/><circle cx="12" cy="18" r="1.8" fill="#252526"/><circle cx="16.3" cy="13.8" r="1.8" fill="#252526"/></svg>
<div style="position:absolute;left:277.45px;top:1716.30px;height:39px;line-height:39px;font:400 26px/39px 'Liberation Sans',sans-serif;letter-spacing:-0.153px;color:#88c796;white-space:pre;-webkit-text-stroke:0.22px;">AGENTS.md</div>
<svg style="position:absolute;left:240.0px;top:1722.2px" width="21" height="22.5" viewBox="0 0 22 24" preserveAspectRatio="none"><path d="M5 0 L11 4.5 L17 0 V11 H22 L11 24 L0 11 H5 Z" fill="#5a9bcf"/></svg>
<div style="position:absolute;left:671.07px;top:1715.90px;height:38px;line-height:38px;font:400 25px/38px 'Liberation Sans',sans-serif;letter-spacing:3.803px;color:#88c796;white-space:pre;-webkit-text-stroke:1.0px;">U</div>
<div style="position:absolute;left:275.82px;top:1760.30px;height:39px;line-height:39px;font:400 26px/39px 'Liberation Sans',sans-serif;letter-spacing:1.241px;color:#cccccc;white-space:pre;-webkit-text-stroke:0.22px;">build-config.ini</div>
<svg style="position:absolute;left:247.0px;top:1768.1px" width="18" height="20" viewBox="0 0 18 20"><path d="M0 1.2 H17 M0 6.6 H10 M0 12 H16 M0 17.4 H12" stroke="#d4d7d6" stroke-width="2.3"/></svg>
</div></div>
<div style="position:absolute;left:208px;top:436px;width:516px;height:8px;background:linear-gradient(rgba(0,0,0,0.38),rgba(0,0,0,0))"></div>
<div style="position:absolute;left:208.00px;top:1788.00px;width:516.00px;height:44.00px;background:#252526;"></div>
<div style="position:absolute;left:208.00px;top:1787.00px;width:516.00px;height:2.00px;background:#484849;"></div>
<svg style="position:absolute;left:212.00px;top:1795.00px;overflow:visible;" width="32.00" height="32.00" viewBox="0 0 16 16" fill="none"><path d="M5.9 3.6 L10.3 8 L5.9 12.4" stroke="#c5c5c5" stroke-width="1.15" stroke-linecap="square" stroke-linejoin="miter" fill="none" /></svg>
<div style="position:absolute;left:247.30px;top:1794.50px;height:33px;line-height:33px;font:700 22px/33px 'Liberation Sans',sans-serif;letter-spacing:0.768px;color:#cccccc;white-space:pre;-webkit-text-stroke:0.1px;">OUTLINE</div>
<div style="position:absolute;left:208.00px;top:1832.00px;width:516.00px;height:44.00px;background:#252526;"></div>
<div style="position:absolute;left:208.00px;top:1831.00px;width:516.00px;height:2.00px;background:#484849;"></div>
<svg style="position:absolute;left:212.00px;top:1839.00px;overflow:visible;" width="32.00" height="32.00" viewBox="0 0 16 16" fill="none"><path d="M5.9 3.6 L10.3 8 L5.9 12.4" stroke="#c5c5c5" stroke-width="1.15" stroke-linecap="square" stroke-linejoin="miter" fill="none" /></svg>
<div style="position:absolute;left:247.95px;top:1838.50px;height:33px;line-height:33px;font:700 22px/33px 'Liberation Sans',sans-serif;letter-spacing:0.606px;color:#cccccc;white-space:pre;-webkit-text-stroke:0.1px;">TIMELINE</div>
<div style="position:absolute;left:208.00px;top:1876.00px;width:516.00px;height:44.00px;background:#252526;"></div>
<div style="position:absolute;left:208.00px;top:1875.00px;width:516.00px;height:2.00px;background:#484849;"></div>
<svg style="position:absolute;left:212.00px;top:1883.00px;overflow:visible;" width="32.00" height="32.00" viewBox="0 0 16 16" fill="none"><path d="M5.9 3.6 L10.3 8 L5.9 12.4" stroke="#c5c5c5" stroke-width="1.15" stroke-linecap="square" stroke-linejoin="miter" fill="none" /></svg>
<div style="position:absolute;left:247.87px;top:1882.50px;height:33px;line-height:33px;font:700 22px/33px 'Liberation Sans',sans-serif;letter-spacing:0.423px;color:#cccccc;white-space:pre;-webkit-text-stroke:0.1px;">JAVA PROJECTS</div>
<div style="position:absolute;left:724.00px;top:146.00px;width:2412.00px;height:70.00px;background:#252526;"></div>
<div style="position:absolute;left:724.00px;top:146.00px;width:384.00px;height:70.00px;background:#1e1e1e;"></div>
<div style="position:absolute;left:755.63px;top:158.20px;height:46px;line-height:46px;font:700 31px/46px 'Liberation Sans',sans-serif;letter-spacing:0.348px;color:#bc4949;white-space:pre;-webkit-text-stroke:0.1px;">J</div>
<div style="position:absolute;left:786.57px;top:162.50px;height:39px;line-height:39px;font:400 26px/39px 'Liberation Sans',sans-serif;letter-spacing:0.457px;color:#e88675;white-space:pre;-webkit-text-stroke:0.22px;">RobotContainer.java</div>
<div style="position:absolute;left:1040.02px;top:162.50px;height:39px;line-height:39px;font:400 26px/39px 'Liberation Sans',sans-serif;letter-spacing:-0.210px;color:#e88675;white-space:pre;-webkit-text-stroke:0.22px;">1</div>
<div style="position:absolute;left:1110.00px;top:146.00px;width:288.00px;height:70.00px;background:#2d2d2d;"></div>
<div style="position:absolute;left:1142.93px;top:158.20px;height:46px;line-height:46px;font:700 31px/46px 'Liberation Sans',sans-serif;letter-spacing:0.348px;color:#bc4949;white-space:pre;-webkit-text-stroke:0.1px;opacity:0.78;">J</div>
<div style="position:absolute;left:1173.47px;top:162.50px;height:39px;line-height:39px;font:400 26px/39px 'Liberation Sans',sans-serif;letter-spacing:0.437px;color:#e88675;white-space:pre;-webkit-text-stroke:0.22px;opacity:0.8;">Robot.java</div>
<div style="position:absolute;left:1310.88px;top:164.00px;height:36px;line-height:36px;font:400 24px/36px 'Liberation Sans',sans-serif;letter-spacing:5.345px;color:#e88675;white-space:pre;-webkit-text-stroke:0.9px;opacity:0.75;">9+</div>
<div style="position:absolute;left:1400.00px;top:146.00px;width:406.00px;height:70.00px;background:#2d2d2d;"></div>
<div style="position:absolute;left:1432.93px;top:158.20px;height:46px;line-height:46px;font:700 31px/46px 'Liberation Sans',sans-serif;letter-spacing:0.348px;color:#bc4949;white-space:pre;-webkit-text-stroke:0.1px;opacity:0.78;">J</div>
<div style="position:absolute;left:1464.62px;top:162.50px;height:39px;line-height:39px;font:400 26px/39px 'Liberation Sans',sans-serif;letter-spacing:0.229px;color:#969696;white-space:pre;-webkit-text-stroke:0.22px;">SwerveMoveTeleop.java</div>
<div style="position:absolute;left:1808.00px;top:146.00px;width:425.00px;height:70.00px;background:#2d2d2d;"></div>
<div style="position:absolute;left:1841.93px;top:158.20px;height:46px;line-height:46px;font:700 31px/46px 'Liberation Sans',sans-serif;letter-spacing:0.348px;color:#bc4949;white-space:pre;-webkit-text-stroke:0.1px;opacity:0.78;">J</div>
<div style="position:absolute;left:1872.67px;top:162.50px;height:39px;line-height:39px;font:400 26px/39px 'Liberation Sans',sans-serif;letter-spacing:0.558px;color:#969696;white-space:pre;-webkit-text-stroke:0.22px;">MoveDirectionTimed.java</div>
<div style="position:absolute;left:2235.00px;top:146.00px;width:383.00px;height:70.00px;background:#2d2d2d;"></div>
<div style="position:absolute;left:2267.53px;top:158.20px;height:46px;line-height:46px;font:700 31px/46px 'Liberation Sans',sans-serif;letter-spacing:0.348px;color:#bc4949;white-space:pre;-webkit-text-stroke:0.1px;opacity:0.78;">J</div>
<div style="position:absolute;left:2299.59px;top:162.50px;height:39px;line-height:39px;font:400 26px/39px 'Liberation Sans',sans-serif;letter-spacing:0.429px;color:#969696;white-space:pre;-webkit-text-stroke:0.22px;">VisionSubsystem.java</div>
<div style="position:absolute;left:2620.00px;top:146.00px;width:206.00px;height:70.00px;background:#2d2d2d;"></div>
<div style="position:absolute;left:2651.43px;top:158.20px;height:46px;line-height:46px;font:700 31px/46px 'Liberation Sans',sans-serif;letter-spacing:0.348px;color:#bc4949;white-space:pre;-webkit-text-stroke:0.1px;opacity:0.78;">J</div>
<div style="position:absolute;left:2680px;top:146px;width:146px;height:70px;overflow:hidden"><div style="position:absolute;left:-2680px;top:-146px">
<div style="position:absolute;left:2682.29px;top:162.50px;height:39px;line-height:39px;font:400 26px/39px 'Liberation Sans',sans-serif;letter-spacing:0.277px;color:#969696;white-space:pre;-webkit-text-stroke:0.22px;">GoToAprilTagCommand.java</div>
</div></div>
<svg style="position:absolute;left:1066.55px;top:167.75px;overflow:visible;" width="28.50" height="28.50" viewBox="0 0 16 16" fill="none"><path d="M3.4 3.4 L12.6 12.6 M12.6 3.4 L3.4 12.6" stroke="#d8d8d8" stroke-width="1.25" stroke-linecap="square" stroke-linejoin="miter" fill="none" /></svg>
<div style="position:absolute;left:2826.00px;top:146.00px;width:310.00px;height:70.00px;background:#252526;"></div>
<svg style="position:absolute;left:2839.00px;top:165.80px;overflow:visible;" width="32.00" height="32.00" viewBox="0 0 16 16" fill="none"><path d="M3.8 2.4 L13 8 L3.8 13.6 Z" stroke="#d0d0d0" stroke-width="1.15" stroke-linecap="square" stroke-linejoin="miter" fill="none" /></svg>
<svg style="position:absolute;left:2876.00px;top:169.50px;overflow:visible;" width="24.00" height="24.00" viewBox="0 0 16 16" fill="none"><path d="M3.6 5.9 L8 10.3 L12.4 5.9" stroke="#d0d0d0" stroke-width="1.3" stroke-linecap="square" stroke-linejoin="miter" fill="none" /></svg>
<svg style="position:absolute;left:2917.80px;top:165.50px;overflow:visible;" width="32.00" height="32.00" viewBox="0 0 16 16" fill="none"><path d="M6.4 3.2 H4.4 L1 8 L4.4 12.8 H7.4 L8 9.6" stroke="#c1464e" stroke-width="1.15" fill="none"/><path d="M6.6 5.4 L4.6 8 L6.2 10.6" stroke="#c1464e" stroke-width="1.15" fill="none"/><path d="M9.6 12.8 H11.6 L15 8 L11.6 3.2 H8.6 L8 6.4" stroke="#6a6a6a" stroke-width="1.15" fill="none"/><path d="M9.4 10.6 L11.4 8 L9.8 5.4" stroke="#6a6a6a" stroke-width="1.15" fill="none"/></svg>
<svg style="position:absolute;left:2968.00px;top:166.00px;overflow:visible;" width="32.00" height="32.00" viewBox="0 0 16 16" fill="none"><path d="M2.2 3.6 Q3.6 1.4 6 3 L12.2 9.4 L14 14.6 L8.6 12.6 L2.6 6.4 Q1.4 5 2.2 3.6 Z" fill="#7a7a7a"/><path d="M11.2 11.6 L13.1 13.8 L10.3 13.0 Z" fill="#3a3a3a"/></svg>
<svg style="position:absolute;left:3023.00px;top:164.00px;overflow:visible;" width="32.00" height="32.00" viewBox="0 0 16 16" fill="none"><rect x="1.9" y="1.9" width="12.2" height="12.2" rx="1.2" stroke="#d0d0d0" stroke-width="1.15" stroke-linecap="square" stroke-linejoin="miter" fill="none" /><path d="M8 2 V14" stroke="#d0d0d0" stroke-width="1.15" stroke-linecap="square" stroke-linejoin="miter" fill="none" /></svg>
<svg style="position:absolute;left:3074.00px;top:165.00px;overflow:visible;" width="32.00" height="32.00" viewBox="0 0 16 16" fill="none"><circle cx="3" cy="8" r="1.15" fill="#d0d0d0"/><circle cx="8" cy="8" r="1.15" fill="#d0d0d0"/><circle cx="13" cy="8" r="1.15" fill="#d0d0d0"/></svg>
<div style="position:absolute;left:724.00px;top:216.00px;width:2412.00px;height:44.00px;background:#1e1e1e;"></div>
<div style="position:absolute;left:755.68px;top:219.50px;height:39px;line-height:39px;font:400 26px/39px 'Liberation Sans',sans-serif;letter-spacing:1.375px;color:#a9a9a9;white-space:pre;-webkit-text-stroke:0.22px;">src</div>
<div style="position:absolute;left:823.97px;top:219.50px;height:39px;line-height:39px;font:400 26px/39px 'Liberation Sans',sans-serif;letter-spacing:1.287px;color:#a9a9a9;white-space:pre;-webkit-text-stroke:0.22px;">main</div>
<div style="position:absolute;left:915.53px;top:219.50px;height:39px;line-height:39px;font:400 26px/39px 'Liberation Sans',sans-serif;letter-spacing:-0.544px;color:#a9a9a9;white-space:pre;-webkit-text-stroke:0.22px;">java</div>
<div style="position:absolute;left:994.43px;top:219.50px;height:39px;line-height:39px;font:400 26px/39px 'Liberation Sans',sans-serif;letter-spacing:2.036px;color:#a9a9a9;white-space:pre;-webkit-text-stroke:0.22px;">frc</div>
<div style="position:absolute;left:1058.27px;top:219.50px;height:39px;line-height:39px;font:400 26px/39px 'Liberation Sans',sans-serif;letter-spacing:1.614px;color:#a9a9a9;white-space:pre;-webkit-text-stroke:0.22px;">robot</div>
<div style="position:absolute;left:1199.27px;top:219.50px;height:39px;line-height:39px;font:400 26px/39px 'Liberation Sans',sans-serif;letter-spacing:0.452px;color:#a9a9a9;white-space:pre;-webkit-text-stroke:0.22px;">RobotContainer.java</div>
<div style="position:absolute;left:1512.67px;top:219.50px;height:39px;line-height:39px;font:400 26px/39px 'Liberation Sans',sans-serif;letter-spacing:0.696px;color:#a9a9a9;white-space:pre;-webkit-text-stroke:0.22px;">RobotContainer</div>
<svg style="position:absolute;left:794.50px;top:225.00px;overflow:visible;" width="30.00" height="30.00" viewBox="0 0 16 16" fill="none"><path d="M5.9 3.6 L10.3 8 L5.9 12.4" stroke="#a0a0a0" stroke-width="1.1" stroke-linecap="square" stroke-linejoin="miter" fill="none" /></svg>
<svg style="position:absolute;left:883.70px;top:225.00px;overflow:visible;" width="30.00" height="30.00" viewBox="0 0 16 16" fill="none"><path d="M5.9 3.6 L10.3 8 L5.9 12.4" stroke="#a0a0a0" stroke-width="1.1" stroke-linecap="square" stroke-linejoin="miter" fill="none" /></svg>
<svg style="position:absolute;left:964.60px;top:225.00px;overflow:visible;" width="30.00" height="30.00" viewBox="0 0 16 16" fill="none"><path d="M5.9 3.6 L10.3 8 L5.9 12.4" stroke="#a0a0a0" stroke-width="1.1" stroke-linecap="square" stroke-linejoin="miter" fill="none" /></svg>
<svg style="position:absolute;left:1029.00px;top:225.00px;overflow:visible;" width="30.00" height="30.00" viewBox="0 0 16 16" fill="none"><path d="M5.9 3.6 L10.3 8 L5.9 12.4" stroke="#a0a0a0" stroke-width="1.1" stroke-linecap="square" stroke-linejoin="miter" fill="none" /></svg>
<svg style="position:absolute;left:1126.00px;top:225.00px;overflow:visible;" width="30.00" height="30.00" viewBox="0 0 16 16" fill="none"><path d="M5.9 3.6 L10.3 8 L5.9 12.4" stroke="#a0a0a0" stroke-width="1.1" stroke-linecap="square" stroke-linejoin="miter" fill="none" /></svg>
<svg style="position:absolute;left:1445.00px;top:225.00px;overflow:visible;" width="30.00" height="30.00" viewBox="0 0 16 16" fill="none"><path d="M5.9 3.6 L10.3 8 L5.9 12.4" stroke="#a0a0a0" stroke-width="1.1" stroke-linecap="square" stroke-linejoin="miter" fill="none" /></svg>
<div style="position:absolute;left:1168.93px;top:215.20px;height:46px;line-height:46px;font:700 31px/46px 'Liberation Sans',sans-serif;letter-spacing:0.548px;color:#bc4949;white-space:pre;-webkit-text-stroke:0.1px;">J</div>
<svg style="position:absolute;left:1472px;top:220px;overflow:visible" width="36" height="36" viewBox="1472 220 36 36" fill="none" stroke="#e2a144" stroke-width="2.3" stroke-linejoin="round"><path d="M1485 225.2 L1492.4 232 L1486.2 239.6 L1478.6 232.6 Z"/><path d="M1489.3 236 L1489.3 247.4 H1495.4 M1489.3 240.6 H1494.6"/><path d="M1499.6 234.6 L1504.6 239.2 L1500.4 243.6 L1495.4 239.2 Z"/><path d="M1500 243.6 L1504.6 247.8 L1501 251.6 L1496.2 247.4 Z"/></svg>
<div style="position:absolute;left:724.00px;top:260.00px;width:2412.00px;height:1274.00px;background:#1e1e1e;"></div>
<div style="position:absolute;left:724px;top:332px;width:2144px;height:1202px;overflow:hidden"><div style="position:absolute;left:-724px;top:-332px">
<div style="position:absolute;left:858px;top:1035.0px;width:2010px;height:33.6px;box-sizing:border-box;border:2px solid #2b2b2b"></div>
<div style="position:absolute;left:855.90px;top:314.00px;width:2.00px;height:36.00px;background:#6e6e6e;"></div>
<div style="position:absolute;left:913.70px;top:314.00px;width:2.00px;height:36.00px;background:#404040;"></div>
<div style="position:absolute;left:971.49px;top:314.00px;width:2.00px;height:36.00px;background:#404040;"></div>
<div style="position:absolute;left:1029.29px;top:314.00px;width:2.00px;height:36.00px;background:#404040;"></div>
<div style="position:absolute;left:700px;top:314.0px;width:103.7px;text-align:right;font:400 24px/36px 'DejaVu Sans Mono','Liberation Mono',monospace;white-space:pre;-webkit-text-stroke:0.35px;color:#858585">98</div>
<div style="position:absolute;left:856.3px;top:314.0px;font:400 24px/36px 'DejaVu Sans Mono','Liberation Mono',monospace;white-space:pre;-webkit-text-stroke:0.35px;letter-spacing:0px">                <span style="color:#71c6b1">ElevatorSubsystem</span><span style="color:#d4d4d4">.</span><span style="color:#dcdcaf">GetInstance</span><span style="color:#cc76d1">(</span><span style="color:#cc76d1">)</span><span style="color:#d4d4d4">,</span></div>
<div style="position:absolute;left:855.90px;top:350.00px;width:2.00px;height:36.00px;background:#6e6e6e;"></div>
<div style="position:absolute;left:913.70px;top:350.00px;width:2.00px;height:36.00px;background:#404040;"></div>
<div style="position:absolute;left:971.49px;top:350.00px;width:2.00px;height:36.00px;background:#404040;"></div>
<div style="position:absolute;left:1029.29px;top:350.00px;width:2.00px;height:36.00px;background:#404040;"></div>
<div style="position:absolute;left:700px;top:350.0px;width:103.7px;text-align:right;font:400 24px/36px 'DejaVu Sans Mono','Liberation Mono',monospace;white-space:pre;-webkit-text-stroke:0.35px;color:#858585">99</div>
<div style="position:absolute;left:856.3px;top:350.0px;font:400 24px/36px 'DejaVu Sans Mono','Liberation Mono',monospace;white-space:pre;-webkit-text-stroke:0.35px;letter-spacing:0px">                <span style="color:#71c6b1">AlgaeSubsystem</span><span style="color:#d4d4d4">.</span><span style="color:#dcdcaf">GetInstance</span><span style="color:#cc76d1">(</span><span style="color:#cc76d1">)</span><span style="color:#d4d4d4">,</span></div>
<div style="position:absolute;left:855.90px;top:386.00px;width:2.00px;height:36.00px;background:#6e6e6e;"></div>
<div style="position:absolute;left:913.70px;top:386.00px;width:2.00px;height:36.00px;background:#404040;"></div>
<div style="position:absolute;left:971.49px;top:386.00px;width:2.00px;height:36.00px;background:#404040;"></div>
<div style="position:absolute;left:1029.29px;top:386.00px;width:2.00px;height:36.00px;background:#404040;"></div>
<div style="position:absolute;left:700px;top:386.0px;width:103.7px;text-align:right;font:400 24px/36px 'DejaVu Sans Mono','Liberation Mono',monospace;white-space:pre;-webkit-text-stroke:0.35px;color:#858585">100</div>
<div style="position:absolute;left:856.3px;top:386.0px;font:400 24px/36px 'DejaVu Sans Mono','Liberation Mono',monospace;white-space:pre;-webkit-text-stroke:0.35px;letter-spacing:0px">                <span style="color:#71c6b1">CompositeConstants</span><span style="color:#d4d4d4">.</span><span style="color:#6fbff9">kBottom</span><span style="color:#f9d849">)</span><span style="color:#4a9df8">)</span><span style="color:#d4d4d4">;</span></div>
<div style="position:absolute;left:855.90px;top:422.00px;width:2.00px;height:36.00px;background:#6e6e6e;"></div>
<div style="position:absolute;left:700px;top:422.0px;width:103.7px;text-align:right;font:400 24px/36px 'DejaVu Sans Mono','Liberation Mono',monospace;white-space:pre;-webkit-text-stroke:0.35px;color:#858585">101</div>
<div style="position:absolute;left:856.3px;top:422.0px;font:400 24px/36px 'DejaVu Sans Mono','Liberation Mono',monospace;white-space:pre;-webkit-text-stroke:0.35px;letter-spacing:0px">    <span style="color:#6fbff9">m_rightFlightStick</span></div>
<div style="position:absolute;left:855.90px;top:458.00px;width:2.00px;height:36.00px;background:#6e6e6e;"></div>
<div style="position:absolute;left:913.70px;top:458.00px;width:2.00px;height:36.00px;background:#404040;"></div>
<div style="position:absolute;left:700px;top:458.0px;width:103.7px;text-align:right;font:400 24px/36px 'DejaVu Sans Mono','Liberation Mono',monospace;white-space:pre;-webkit-text-stroke:0.35px;color:#858585">102</div>
<div style="position:absolute;left:856.3px;top:458.0px;font:400 24px/36px 'DejaVu Sans Mono','Liberation Mono',monospace;white-space:pre;-webkit-text-stroke:0.35px;letter-spacing:0px">        <span style="color:#d4d4d4">.</span><span style="color:#dcdcaf">trigger</span><span style="color:#4a9df8">(</span><span style="color:#4a9df8">)</span></div>
<div style="position:absolute;left:855.90px;top:494.00px;width:2.00px;height:36.00px;background:#6e6e6e;"></div>
<div style="position:absolute;left:913.70px;top:494.00px;width:2.00px;height:36.00px;background:#404040;"></div>
<div style="position:absolute;left:700px;top:494.0px;width:103.7px;text-align:right;font:400 24px/36px 'DejaVu Sans Mono','Liberation Mono',monospace;white-space:pre;-webkit-text-stroke:0.35px;color:#858585">103</div>
<div style="position:absolute;left:856.3px;top:494.0px;font:400 24px/36px 'DejaVu Sans Mono','Liberation Mono',monospace;white-space:pre;-webkit-text-stroke:0.35px;letter-spacing:0px">        <span style="color:#d4d4d4">.</span><span style="color:#dcdcaf">whileTrue</span><span style="color:#4a9df8">(</span><span style="color:#bc89bd">new</span> <span style="color:#dcdcaf">ManualScore</span><span style="color:#f9d849">(</span><span style="color:#71c6b1">CoralSubsystem</span><span style="color:#d4d4d4">.</span><span style="color:#dcdcaf">GetInstance</span><span style="color:#cc76d1">(</span><span style="color:#cc76d1">)</span><span style="color:#d4d4d4">,</span> <span style="color:#71c6b1">ElevatorSubsystem</span><span style="color:#d4d4d4">.</span><span style="color:#dcdcaf">GetInstance</span><span style="color:#cc76d1">(</span><span style="color:#cc76d1">)</span><span style="color:#f9d849">)</span><span style="color:#4a9df8">)</span><span style="color:#d4d4d4">;</span></div>
<div style="position:absolute;left:855.90px;top:530.00px;width:2.00px;height:36.00px;background:#6e6e6e;"></div>
<div style="position:absolute;left:700px;top:530.0px;width:103.7px;text-align:right;font:400 24px/36px 'DejaVu Sans Mono','Liberation Mono',monospace;white-space:pre;-webkit-text-stroke:0.35px;color:#858585">104</div>
<div style="position:absolute;left:856.3px;top:530.0px;font:400 24px/36px 'DejaVu Sans Mono','Liberation Mono',monospace;white-space:pre;-webkit-text-stroke:0.35px;letter-spacing:0px">  <span style="color:#cc76d1">}</span></div>
<div style="position:absolute;left:855.90px;top:566.00px;width:2.00px;height:36.00px;background:#6e6e6e;"></div>
<div style="position:absolute;left:700px;top:566.0px;width:103.7px;text-align:right;font:400 24px/36px 'DejaVu Sans Mono','Liberation Mono',monospace;white-space:pre;-webkit-text-stroke:0.35px;color:#858585">105</div>
<div style="position:absolute;left:856.3px;top:566.0px;font:400 24px/36px 'DejaVu Sans Mono','Liberation Mono',monospace;white-space:pre;-webkit-text-stroke:0.35px;letter-spacing:0px"></div>
<div style="position:absolute;left:855.90px;top:602.00px;width:2.00px;height:36.00px;background:#6e6e6e;"></div>
<div style="position:absolute;left:700px;top:602.0px;width:103.7px;text-align:right;font:400 24px/36px 'DejaVu Sans Mono','Liberation Mono',monospace;white-space:pre;-webkit-text-stroke:0.35px;color:#858585">106</div>
<div style="position:absolute;left:856.3px;top:602.0px;font:400 24px/36px 'DejaVu Sans Mono','Liberation Mono',monospace;white-space:pre;-webkit-text-stroke:0.35px;letter-spacing:0px">  <span style="color:#679ad1">public</span> <span style="color:#71c6b1">void</span> <span style="color:#dcdcaf">setElevatorCommands</span><span style="color:#cc76d1">(</span><span style="color:#cc76d1">)</span> <span style="color:#cc76d1">{</span></div>
<div style="position:absolute;left:855.90px;top:638.00px;width:2.00px;height:36.00px;background:#6e6e6e;"></div>
<div style="position:absolute;left:700px;top:638.0px;width:103.7px;text-align:right;font:400 24px/36px 'DejaVu Sans Mono','Liberation Mono',monospace;white-space:pre;-webkit-text-stroke:0.35px;color:#858585">107</div>
<div style="position:absolute;left:856.3px;top:638.0px;font:400 24px/36px 'DejaVu Sans Mono','Liberation Mono',monospace;white-space:pre;-webkit-text-stroke:0.35px;letter-spacing:0px">  <span style="color:#cc76d1">}</span></div>
<div style="position:absolute;left:855.90px;top:674.00px;width:2.00px;height:36.00px;background:#6e6e6e;"></div>
<div style="position:absolute;left:700px;top:674.0px;width:103.7px;text-align:right;font:400 24px/36px 'DejaVu Sans Mono','Liberation Mono',monospace;white-space:pre;-webkit-text-stroke:0.35px;color:#858585">108</div>
<div style="position:absolute;left:856.3px;top:674.0px;font:400 24px/36px 'DejaVu Sans Mono','Liberation Mono',monospace;white-space:pre;-webkit-text-stroke:0.35px;letter-spacing:0px"></div>
<div style="position:absolute;left:855.90px;top:710.00px;width:2.00px;height:36.00px;background:#6e6e6e;"></div>
<div style="position:absolute;left:700px;top:710.0px;width:103.7px;text-align:right;font:400 24px/36px 'DejaVu Sans Mono','Liberation Mono',monospace;white-space:pre;-webkit-text-stroke:0.35px;color:#858585">109</div>
<div style="position:absolute;left:856.3px;top:710.0px;font:400 24px/36px 'DejaVu Sans Mono','Liberation Mono',monospace;white-space:pre;-webkit-text-stroke:0.35px;letter-spacing:0px">  <span style="color:#679ad1">public</span> <span style="color:#71c6b1">void</span> <span style="color:#dcdcaf">setCoralCommands</span><span style="color:#cc76d1">(</span><span style="color:#cc76d1">)</span> <span style="color:#cc76d1">{</span></div>
<div style="position:absolute;left:855.90px;top:746.00px;width:2.00px;height:36.00px;background:#6e6e6e;"></div>
<div style="position:absolute;left:700px;top:746.0px;width:103.7px;text-align:right;font:400 24px/36px 'DejaVu Sans Mono','Liberation Mono',monospace;white-space:pre;-webkit-text-stroke:0.35px;color:#858585">110</div>
<div style="position:absolute;left:856.3px;top:746.0px;font:400 24px/36px 'DejaVu Sans Mono','Liberation Mono',monospace;white-space:pre;-webkit-text-stroke:0.35px;letter-spacing:0px">    <span style="color:#71c6b1">CoralSubsystem</span> <span style="color:#aadafa">coralSubsystem</span> <span style="color:#d4d4d4">=</span> <span style="color:#71c6b1">CoralSubsystem</span><span style="color:#d4d4d4">.</span><span style="color:#dcdcaf">GetInstance</span><span style="color:#4a9df8">(</span><span style="color:#4a9df8">)</span><span style="color:#d4d4d4">;</span></div>
<div style="position:absolute;left:855.90px;top:782.00px;width:2.00px;height:36.00px;background:#6e6e6e;"></div>
<div style="position:absolute;left:700px;top:782.0px;width:103.7px;text-align:right;font:400 24px/36px 'DejaVu Sans Mono','Liberation Mono',monospace;white-space:pre;-webkit-text-stroke:0.35px;color:#858585">111</div>
<div style="position:absolute;left:856.3px;top:782.0px;font:400 24px/36px 'DejaVu Sans Mono','Liberation Mono',monospace;white-space:pre;-webkit-text-stroke:0.35px;letter-spacing:0px">    <span style="color:#6fbff9">m_leftFlightStick</span><span style="color:#d4d4d4">.</span><span style="color:#dcdcaf">trigger</span><span style="color:#4a9df8">(</span><span style="color:#4a9df8">)</span><span style="color:#d4d4d4">.</span><span style="color:#dcdcaf">whileTrue</span><span style="color:#4a9df8">(</span><span style="color:#bc89bd">new</span> <span style="color:#dcdcaf">CoralIntake</span><span style="color:#f9d849">(</span><span style="color:#aadafa">coralSubsystem</span><span style="color:#f9d849">)</span><span style="color:#4a9df8">)</span><span style="color:#d4d4d4">;</span></div>
<div style="position:absolute;left:855.90px;top:818.00px;width:2.00px;height:36.00px;background:#6e6e6e;"></div>
<div style="position:absolute;left:700px;top:818.0px;width:103.7px;text-align:right;font:400 24px/36px 'DejaVu Sans Mono','Liberation Mono',monospace;white-space:pre;-webkit-text-stroke:0.35px;color:#858585">112</div>
<div style="position:absolute;left:856.3px;top:818.0px;font:400 24px/36px 'DejaVu Sans Mono','Liberation Mono',monospace;white-space:pre;-webkit-text-stroke:0.35px;letter-spacing:0px">    <span style="color:#6fbff9">m_rightFlightStick</span></div>
<div style="position:absolute;left:855.90px;top:854.00px;width:2.00px;height:36.00px;background:#6e6e6e;"></div>
<div style="position:absolute;left:913.70px;top:854.00px;width:2.00px;height:36.00px;background:#404040;"></div>
<div style="position:absolute;left:700px;top:854.0px;width:103.7px;text-align:right;font:400 24px/36px 'DejaVu Sans Mono','Liberation Mono',monospace;white-space:pre;-webkit-text-stroke:0.35px;color:#858585">113</div>
<div style="position:absolute;left:856.3px;top:854.0px;font:400 24px/36px 'DejaVu Sans Mono','Liberation Mono',monospace;white-space:pre;-webkit-text-stroke:0.35px;letter-spacing:0px">        <span style="color:#d4d4d4">.</span><span style="color:#dcdcaf">B5</span><span style="color:#4a9df8">(</span><span style="color:#4a9df8">)</span></div>
<div style="position:absolute;left:855.90px;top:890.00px;width:2.00px;height:36.00px;background:#6e6e6e;"></div>
<div style="position:absolute;left:913.70px;top:890.00px;width:2.00px;height:36.00px;background:#404040;"></div>
<div style="position:absolute;left:700px;top:890.0px;width:103.7px;text-align:right;font:400 24px/36px 'DejaVu Sans Mono','Liberation Mono',monospace;white-space:pre;-webkit-text-stroke:0.35px;color:#858585">114</div>
<div style="position:absolute;left:856.3px;top:890.0px;font:400 24px/36px 'DejaVu Sans Mono','Liberation Mono',monospace;white-space:pre;-webkit-text-stroke:0.35px;letter-spacing:0px">        <span style="color:#d4d4d4">.</span><span style="color:#dcdcaf">onTrue</span><span style="color:#4a9df8">(</span></div>
<div style="position:absolute;left:855.90px;top:926.00px;width:2.00px;height:36.00px;background:#6e6e6e;"></div>
<div style="position:absolute;left:913.70px;top:926.00px;width:2.00px;height:36.00px;background:#404040;"></div>
<div style="position:absolute;left:971.49px;top:926.00px;width:2.00px;height:36.00px;background:#404040;"></div>
<div style="position:absolute;left:700px;top:926.0px;width:103.7px;text-align:right;font:400 24px/36px 'DejaVu Sans Mono','Liberation Mono',monospace;white-space:pre;-webkit-text-stroke:0.35px;color:#858585">115</div>
<div style="position:absolute;left:856.3px;top:926.0px;font:400 24px/36px 'DejaVu Sans Mono','Liberation Mono',monospace;white-space:pre;-webkit-text-stroke:0.35px;letter-spacing:0px">            <span style="color:#aadafa">coralSubsystem</span><span style="color:#d4d4d4">.</span><span style="color:#dcdcaf">runOnce</span><span style="color:#f9d849">(</span><span style="color:#cc76d1">(</span><span style="color:#cc76d1">)</span> <span style="color:#679ad1">-&gt;</span> <span style="color:#aadafa">coralSubsystem</span><span style="color:#d4d4d4">.</span><span style="color:#dcdcaf">calibrateWrist</span><span style="color:#cc76d1">(</span><span style="color:#cc76d1">)</span><span style="color:#f9d849">)</span><span style="color:#4a9df8">)</span><span style="color:#d4d4d4">;</span></div>
<div style="position:absolute;left:855.90px;top:962.00px;width:2.00px;height:36.00px;background:#6e6e6e;"></div>
<div style="position:absolute;left:700px;top:962.0px;width:103.7px;text-align:right;font:400 24px/36px 'DejaVu Sans Mono','Liberation Mono',monospace;white-space:pre;-webkit-text-stroke:0.35px;color:#858585">116</div>
<div style="position:absolute;left:856.3px;top:962.0px;font:400 24px/36px 'DejaVu Sans Mono','Liberation Mono',monospace;white-space:pre;-webkit-text-stroke:0.35px;letter-spacing:0px">    <span style="color:#aadafa">coralSubsystem</span><span style="color:#d4d4d4">.</span><span style="color:#dcdcaf">setDefaultCommand</span><span style="color:#4a9df8">(</span><span style="color:#bc89bd">new</span> <span style="color:#dcdcaf">HoldCoral</span><span style="color:#f9d849">(</span><span style="color:#aadafa">coralSubsystem</span><span style="color:#f9d849">)</span><span style="color:#4a9df8">)</span><span style="color:#d4d4d4">;</span></div>
<div style="position:absolute;left:855.90px;top:998.00px;width:2.00px;height:36.00px;background:#6e6e6e;"></div>
<div style="position:absolute;left:700px;top:998.0px;width:103.7px;text-align:right;font:400 24px/36px 'DejaVu Sans Mono','Liberation Mono',monospace;white-space:pre;-webkit-text-stroke:0.35px;color:#858585">117</div>
<div style="position:absolute;left:856.3px;top:998.0px;font:400 24px/36px 'DejaVu Sans Mono','Liberation Mono',monospace;white-space:pre;-webkit-text-stroke:0.35px;letter-spacing:0px">  <span style="color:#cc76d1">}</span></div>
<div style="position:absolute;left:855.90px;top:1034.00px;width:2.00px;height:36.00px;background:#6e6e6e;"></div>
<div style="position:absolute;left:700px;top:1034.0px;width:103.7px;text-align:right;font:400 24px/36px 'DejaVu Sans Mono','Liberation Mono',monospace;white-space:pre;-webkit-text-stroke:0.35px;color:#c6c6c6">118</div>
<div style="position:absolute;left:928.3px;top:1034.0px;font:400 24px/36px 'DejaVu Sans Mono','Liberation Mono',monospace;white-space:pre;-webkit-text-stroke:0.35px;color:rgba(153,153,153,0.45)">Goofball06, 7 months ago • working elevator</div>
<div style="position:absolute;left:855.90px;top:1070.00px;width:2.00px;height:36.00px;background:#6e6e6e;"></div>
<div style="position:absolute;left:700px;top:1070.0px;width:103.7px;text-align:right;font:400 24px/36px 'DejaVu Sans Mono','Liberation Mono',monospace;white-space:pre;-webkit-text-stroke:0.35px;color:#858585">119</div>
<div style="position:absolute;left:856.3px;top:1070.0px;font:400 24px/36px 'DejaVu Sans Mono','Liberation Mono',monospace;white-space:pre;-webkit-text-stroke:0.35px;letter-spacing:0px">  <span style="color:#679ad1">public</span> <span style="color:#71c6b1">void</span> <span style="color:#dcdcaf">setAlgaeCommands</span><span style="color:#cc76d1">(</span><span style="color:#cc76d1">)</span> <span style="color:#cc76d1">{</span></div>
<div style="position:absolute;left:855.90px;top:1106.00px;width:2.00px;height:36.00px;background:#6e6e6e;"></div>
<div style="position:absolute;left:700px;top:1106.0px;width:103.7px;text-align:right;font:400 24px/36px 'DejaVu Sans Mono','Liberation Mono',monospace;white-space:pre;-webkit-text-stroke:0.35px;color:#858585">120</div>
<div style="position:absolute;left:856.3px;top:1106.0px;font:400 24px/36px 'DejaVu Sans Mono','Liberation Mono',monospace;white-space:pre;-webkit-text-stroke:0.35px;letter-spacing:0px">    <span style="color:#71c6b1">AlgaeSubsystem</span> <span style="color:#aadafa">algaeSubsystem</span> <span style="color:#d4d4d4">=</span> <span style="color:#71c6b1">AlgaeSubsystem</span><span style="color:#d4d4d4">.</span><span style="color:#dcdcaf">GetInstance</span><span style="color:#4a9df8">(</span><span style="color:#4a9df8">)</span><span style="color:#d4d4d4">;</span></div>
<div style="position:absolute;left:855.90px;top:1142.00px;width:2.00px;height:36.00px;background:#6e6e6e;"></div>
<div style="position:absolute;left:700px;top:1142.0px;width:103.7px;text-align:right;font:400 24px/36px 'DejaVu Sans Mono','Liberation Mono',monospace;white-space:pre;-webkit-text-stroke:0.35px;color:#858585">121</div>
<div style="position:absolute;left:856.3px;top:1142.0px;font:400 24px/36px 'DejaVu Sans Mono','Liberation Mono',monospace;white-space:pre;-webkit-text-stroke:0.35px;letter-spacing:0px">    <span style="color:#71c6b1">ElevatorSubsystem</span> <span style="color:#aadafa">elevatorSubsystem</span> <span style="color:#d4d4d4">=</span> <span style="color:#71c6b1">ElevatorSubsystem</span><span style="color:#d4d4d4">.</span><span style="color:#dcdcaf">GetInstance</span><span style="color:#4a9df8">(</span><span style="color:#4a9df8">)</span><span style="color:#d4d4d4">;</span></div>
<div style="position:absolute;left:855.90px;top:1178.00px;width:2.00px;height:36.00px;background:#6e6e6e;"></div>
<div style="position:absolute;left:700px;top:1178.0px;width:103.7px;text-align:right;font:400 24px/36px 'DejaVu Sans Mono','Liberation Mono',monospace;white-space:pre;-webkit-text-stroke:0.35px;color:#858585">122</div>
<div style="position:absolute;left:856.3px;top:1178.0px;font:400 24px/36px 'DejaVu Sans Mono','Liberation Mono',monospace;white-space:pre;-webkit-text-stroke:0.35px;letter-spacing:0px">    <span style="color:#6fbff9">m_rightFlightStick</span><span style="color:#d4d4d4">.</span><span style="color:#dcdcaf">B16</span><span style="color:#4a9df8">(</span><span style="color:#4a9df8">)</span><span style="color:#d4d4d4">.</span><span style="color:#dcdcaf">whileTrue</span><span style="color:#4a9df8">(</span><span style="color:#bc89bd">new</span> <span style="color:#dcdcaf">AlgaeIntake</span><span style="color:#f9d849">(</span><span style="color:#aadafa">algaeSubsystem</span><span style="color:#f9d849">)</span><span style="color:#4a9df8">)</span><span style="color:#d4d4d4">;</span></div>
<div style="position:absolute;left:855.90px;top:1214.00px;width:2.00px;height:36.00px;background:#6e6e6e;"></div>
<div style="position:absolute;left:700px;top:1214.0px;width:103.7px;text-align:right;font:400 24px/36px 'DejaVu Sans Mono','Liberation Mono',monospace;white-space:pre;-webkit-text-stroke:0.35px;color:#858585">123</div>
<div style="position:absolute;left:856.3px;top:1214.0px;font:400 24px/36px 'DejaVu Sans Mono','Liberation Mono',monospace;white-space:pre;-webkit-text-stroke:0.35px;letter-spacing:0px">    <span style="color:#6fbff9">m_rightFlightStick</span><span style="color:#d4d4d4">.</span><span style="color:#dcdcaf">B17</span><span style="color:#4a9df8">(</span><span style="color:#4a9df8">)</span><span style="color:#d4d4d4">.</span><span style="color:#dcdcaf">whileTrue</span><span style="color:#4a9df8">(</span><span style="color:#bc89bd">new</span> <span style="color:#dcdcaf">AlgaeEject</span><span style="color:#f9d849">(</span><span style="color:#aadafa">algaeSubsystem</span><span style="color:#f9d849">)</span><span style="color:#4a9df8">)</span><span style="color:#d4d4d4">;</span></div>
<div style="position:absolute;left:855.90px;top:1250.00px;width:2.00px;height:36.00px;background:#6e6e6e;"></div>
<div style="position:absolute;left:700px;top:1250.0px;width:103.7px;text-align:right;font:400 24px/36px 'DejaVu Sans Mono','Liberation Mono',monospace;white-space:pre;-webkit-text-stroke:0.35px;color:#858585">124</div>
<div style="position:absolute;left:856.3px;top:1250.0px;font:400 24px/36px 'DejaVu Sans Mono','Liberation Mono',monospace;white-space:pre;-webkit-text-stroke:0.35px;letter-spacing:0px">    <span style="color:#6fbff9">m_operatorPanel</span></div>
<div style="position:absolute;left:855.90px;top:1286.00px;width:2.00px;height:36.00px;background:#6e6e6e;"></div>
<div style="position:absolute;left:913.70px;top:1286.00px;width:2.00px;height:36.00px;background:#404040;"></div>
<div style="position:absolute;left:700px;top:1286.0px;width:103.7px;text-align:right;font:400 24px/36px 'DejaVu Sans Mono','Liberation Mono',monospace;white-space:pre;-webkit-text-stroke:0.35px;color:#858585">125</div>
<div style="position:absolute;left:856.3px;top:1286.0px;font:400 24px/36px 'DejaVu Sans Mono','Liberation Mono',monospace;white-space:pre;-webkit-text-stroke:0.35px;letter-spacing:0px">        <span style="color:#d4d4d4">.</span><span style="color:#dcdcaf">blackButton</span><span style="color:#4a9df8">(</span><span style="color:#4a9df8">)</span></div>
<div style="position:absolute;left:855.90px;top:1322.00px;width:2.00px;height:36.00px;background:#6e6e6e;"></div>
<div style="position:absolute;left:913.70px;top:1322.00px;width:2.00px;height:36.00px;background:#404040;"></div>
<div style="position:absolute;left:700px;top:1322.0px;width:103.7px;text-align:right;font:400 24px/36px 'DejaVu Sans Mono','Liberation Mono',monospace;white-space:pre;-webkit-text-stroke:0.35px;color:#858585">126</div>
<div style="position:absolute;left:856.3px;top:1322.0px;font:400 24px/36px 'DejaVu Sans Mono','Liberation Mono',monospace;white-space:pre;-webkit-text-stroke:0.35px;letter-spacing:0px">        <span style="color:#d4d4d4">.</span><span style="color:#dcdcaf">onTrue</span><span style="color:#4a9df8">(</span></div>
<div style="position:absolute;left:855.90px;top:1358.00px;width:2.00px;height:36.00px;background:#6e6e6e;"></div>
<div style="position:absolute;left:913.70px;top:1358.00px;width:2.00px;height:36.00px;background:#404040;"></div>
<div style="position:absolute;left:971.49px;top:1358.00px;width:2.00px;height:36.00px;background:#404040;"></div>
<div style="position:absolute;left:700px;top:1358.0px;width:103.7px;text-align:right;font:400 24px/36px 'DejaVu Sans Mono','Liberation Mono',monospace;white-space:pre;-webkit-text-stroke:0.35px;color:#858585">127</div>
<div style="position:absolute;left:856.3px;top:1358.0px;font:400 24px/36px 'DejaVu Sans Mono','Liberation Mono',monospace;white-space:pre;-webkit-text-stroke:0.35px;letter-spacing:0px">            <span style="color:#bc89bd">new</span> <span style="color:#dcdcaf">ElevatorAndAlgae</span><span style="color:#f9d849">(</span></div>
<div style="position:absolute;left:855.90px;top:1394.00px;width:2.00px;height:36.00px;background:#6e6e6e;"></div>
<div style="position:absolute;left:913.70px;top:1394.00px;width:2.00px;height:36.00px;background:#404040;"></div>
<div style="position:absolute;left:971.49px;top:1394.00px;width:2.00px;height:36.00px;background:#404040;"></div>
<div style="position:absolute;left:1029.29px;top:1394.00px;width:2.00px;height:36.00px;background:#404040;"></div>
<div style="position:absolute;left:700px;top:1394.0px;width:103.7px;text-align:right;font:400 24px/36px 'DejaVu Sans Mono','Liberation Mono',monospace;white-space:pre;-webkit-text-stroke:0.35px;color:#858585">128</div>
<div style="position:absolute;left:856.3px;top:1394.0px;font:400 24px/36px 'DejaVu Sans Mono','Liberation Mono',monospace;white-space:pre;-webkit-text-stroke:0.35px;letter-spacing:0px">                <span style="color:#aadafa">elevatorSubsystem</span><span style="color:#d4d4d4">,</span></div>
<div style="position:absolute;left:855.90px;top:1430.00px;width:2.00px;height:36.00px;background:#6e6e6e;"></div>
<div style="position:absolute;left:913.70px;top:1430.00px;width:2.00px;height:36.00px;background:#404040;"></div>
<div style="position:absolute;left:971.49px;top:1430.00px;width:2.00px;height:36.00px;background:#404040;"></div>
<div style="position:absolute;left:1029.29px;top:1430.00px;width:2.00px;height:36.00px;background:#404040;"></div>
<div style="position:absolute;left:700px;top:1430.0px;width:103.7px;text-align:right;font:400 24px/36px 'DejaVu Sans Mono','Liberation Mono',monospace;white-space:pre;-webkit-text-stroke:0.35px;color:#858585">129</div>
<div style="position:absolute;left:856.3px;top:1430.0px;font:400 24px/36px 'DejaVu Sans Mono','Liberation Mono',monospace;white-space:pre;-webkit-text-stroke:0.35px;letter-spacing:0px">                <span style="color:#aadafa">algaeSubsystem</span><span style="color:#d4d4d4">,</span></div>
<div style="position:absolute;left:855.90px;top:1466.00px;width:2.00px;height:36.00px;background:#6e6e6e;"></div>
<div style="position:absolute;left:913.70px;top:1466.00px;width:2.00px;height:36.00px;background:#404040;"></div>
<div style="position:absolute;left:971.49px;top:1466.00px;width:2.00px;height:36.00px;background:#404040;"></div>
<div style="position:absolute;left:1029.29px;top:1466.00px;width:2.00px;height:36.00px;background:#404040;"></div>
<div style="position:absolute;left:700px;top:1466.0px;width:103.7px;text-align:right;font:400 24px/36px 'DejaVu Sans Mono','Liberation Mono',monospace;white-space:pre;-webkit-text-stroke:0.35px;color:#858585">130</div>
<div style="position:absolute;left:856.3px;top:1466.0px;font:400 24px/36px 'DejaVu Sans Mono','Liberation Mono',monospace;white-space:pre;-webkit-text-stroke:0.35px;letter-spacing:0px">                <span style="color:#71c6b1">CompositeConstants</span><span style="color:#d4d4d4">.</span><span style="color:#6fbff9">kHighAlgae</span><span style="color:#f9d849">)</span><span style="color:#4a9df8">)</span><span style="color:#d4d4d4">;</span></div>
<div style="position:absolute;left:855.90px;top:1502.00px;width:2.00px;height:36.00px;background:#6e6e6e;"></div>
<div style="position:absolute;left:700px;top:1502.0px;width:103.7px;text-align:right;font:400 24px/36px 'DejaVu Sans Mono','Liberation Mono',monospace;white-space:pre;-webkit-text-stroke:0.35px;color:#858585">131</div>
<div style="position:absolute;left:856.3px;top:1502.0px;font:400 24px/36px 'DejaVu Sans Mono','Liberation Mono',monospace;white-space:pre;-webkit-text-stroke:0.35px;letter-spacing:0px">    <span style="color:#6fbff9">m_operatorPanel</span></div>
</div></div>
<div style="position:absolute;left:724px;top:260px;width:2144px;height:72px;background:#1e1e1e;box-shadow:0 6px 5px -3px rgba(0,0,0,0.9)"></div>
<div style="position:absolute;left:700px;top:261.2px;width:103.7px;text-align:right;font:400 24px/36px 'DejaVu Sans Mono','Liberation Mono',monospace;white-space:pre;-webkit-text-stroke:0.35px;color:#858585">37</div>
<div style="position:absolute;left:856.3px;top:261.2px;font:400 24px/36px 'DejaVu Sans Mono','Liberation Mono',monospace;white-space:pre;-webkit-text-stroke:0.35px;"><span style="color:#679ad1">public</span> <span style="color:#679ad1">class</span> <span style="color:#71c6b1">RobotContainer</span> <span style="color:#f9d849">{</span></div>
<div style="position:absolute;left:700px;top:297.2px;width:103.7px;text-align:right;font:400 24px/36px 'DejaVu Sans Mono','Liberation Mono',monospace;white-space:pre;-webkit-text-stroke:0.35px;color:#858585">72</div>
<div style="position:absolute;left:856.3px;top:297.2px;font:400 24px/36px 'DejaVu Sans Mono','Liberation Mono',monospace;white-space:pre;-webkit-text-stroke:0.35px;">  <span style="color:#679ad1">public</span> <span style="color:#71c6b1">void</span> <span style="color:#dcdcaf">setCompositeCommands</span><span style="color:#cc76d1">(</span><span style="color:#cc76d1">)</span> <span style="color:#cc76d1">{</span></div>
<div style="position:absolute;left:2876.00px;top:532.00px;width:232.00px;height:4.00px;background:#7a3226;"></div>
<div style="position:absolute;left:2926.00px;top:532.00px;width:18.00px;height:4.00px;background:#d35039;"></div>
<div style="position:absolute;left:2876px;top:259.6px;width:232px;height:720px;overflow:hidden;font:700 3.322px/4px 'DejaVu Sans Mono','Liberation Mono',monospace;white-space:pre;opacity:0.72;-webkit-text-stroke:0.15px"><span style="color:#74985d">// Copyright (c) FIRST and other WPILib contributors.</span>
<span style="color:#74985d">// Open Source Software; you can modify and/or share it under the terms of</span>
<span style="color:#74985d">// the WPILib BSD license file in the root directory of this project.</span>

<span style="color:#679ad1">package</span> <span style="color:#d4d4d4">frc</span><span style="color:#d4d4d4">.</span><span style="color:#d4d4d4">robot</span><span style="color:#d4d4d4">;</span>

<span style="color:#679ad1">import</span> <span style="color:#d4d4d4">frc</span><span style="color:#d4d4d4">.</span><span style="color:#d4d4d4">robot</span><span style="color:#d4d4d4">.</span><span style="color:#d4d4d4">command</span><span style="color:#d4d4d4">.</span><span style="color:#d4d4d4">SwerveMoveTeleop</span><span style="color:#d4d4d4">;</span>
<span style="color:#679ad1">import</span> <span style="color:#d4d4d4">frc</span><span style="color:#d4d4d4">.</span><span style="color:#d4d4d4">robot</span><span style="color:#d4d4d4">.</span><span style="color:#d4d4d4">command</span><span style="color:#d4d4d4">.</span><span style="color:#d4d4d4">algae_commands</span><span style="color:#d4d4d4">.</span><span style="color:#d4d4d4">AlgaeEject</span><span style="color:#d4d4d4">;</span>
<span style="color:#679ad1">import</span> <span style="color:#d4d4d4">frc</span><span style="color:#d4d4d4">.</span><span style="color:#d4d4d4">robot</span><span style="color:#d4d4d4">.</span><span style="color:#d4d4d4">command</span><span style="color:#d4d4d4">.</span><span style="color:#d4d4d4">algae_commands</span><span style="color:#d4d4d4">.</span><span style="color:#d4d4d4">AlgaeIntake</span><span style="color:#d4d4d4">;</span>
<span style="color:#679ad1">import</span> <span style="color:#d4d4d4">frc</span><span style="color:#d4d4d4">.</span><span style="color:#d4d4d4">robot</span><span style="color:#d4d4d4">.</span><span style="color:#d4d4d4">command</span><span style="color:#d4d4d4">.</span><span style="color:#d4d4d4">algae_commands</span><span style="color:#d4d4d4">.</span><span style="color:#d4d4d4">HoldAlgae</span><span style="color:#d4d4d4">;</span>
<span style="color:#679ad1">import</span> <span style="color:#d4d4d4">frc</span><span style="color:#d4d4d4">.</span><span style="color:#d4d4d4">robot</span><span style="color:#d4d4d4">.</span><span style="color:#d4d4d4">command</span><span style="color:#d4d4d4">.</span><span style="color:#d4d4d4">alignment_commands</span><span style="color:#d4d4d4">.</span><span style="color:#d4d4d4">AlignReef</span><span style="color:#d4d4d4">;</span>
<span style="color:#679ad1">import</span> <span style="color:#d4d4d4">frc</span><span style="color:#d4d4d4">.</span><span style="color:#d4d4d4">robot</span><span style="color:#d4d4d4">.</span><span style="color:#d4d4d4">command</span><span style="color:#d4d4d4">.</span><span style="color:#d4d4d4">composites</span><span style="color:#d4d4d4">.</span><span style="color:#d4d4d4">ElevatorAndAlgae</span><span style="color:#d4d4d4">;</span>
<span style="color:#679ad1">import</span> <span style="color:#d4d4d4">frc</span><span style="color:#d4d4d4">.</span><span style="color:#d4d4d4">robot</span><span style="color:#d4d4d4">.</span><span style="color:#d4d4d4">command</span><span style="color:#d4d4d4">.</span><span style="color:#d4d4d4">composites</span><span style="color:#d4d4d4">.</span><span style="color:#d4d4d4">ElevatorAndCoral</span><span style="color:#d4d4d4">;</span>
<span style="color:#679ad1">import</span> <span style="color:#d4d4d4">frc</span><span style="color:#d4d4d4">.</span><span style="color:#d4d4d4">robot</span><span style="color:#d4d4d4">.</span><span style="color:#d4d4d4">command</span><span style="color:#d4d4d4">.</span><span style="color:#d4d4d4">composites</span><span style="color:#d4d4d4">.</span><span style="color:#d4d4d4">ManualScore</span><span style="color:#d4d4d4">;</span>
<span style="color:#679ad1">import</span> <span style="color:#d4d4d4">frc</span><span style="color:#d4d4d4">.</span><span style="color:#d4d4d4">robot</span><span style="color:#d4d4d4">.</span><span style="color:#d4d4d4">command</span><span style="color:#d4d4d4">.</span><span style="color:#d4d4d4">coral_commands</span><span style="color:#d4d4d4">.</span><span style="color:#d4d4d4">CoralIntake</span><span style="color:#d4d4d4">;</span>
<span style="color:#679ad1">import</span> <span style="color:#d4d4d4">frc</span><span style="color:#d4d4d4">.</span><span style="color:#d4d4d4">robot</span><span style="color:#d4d4d4">.</span><span style="color:#d4d4d4">command</span><span style="color:#d4d4d4">.</span><span style="color:#d4d4d4">coral_commands</span><span style="color:#d4d4d4">.</span><span style="color:#d4d4d4">HoldCoral</span><span style="color:#d4d4d4">;</span>
<span style="color:#679ad1">import</span> <span style="color:#d4d4d4">frc</span><span style="color:#d4d4d4">.</span><span style="color:#d4d4d4">robot</span><span style="color:#d4d4d4">.</span><span style="color:#d4d4d4">command</span><span style="color:#d4d4d4">.</span><span style="color:#d4d4d4">elevator_commands</span><span style="color:#d4d4d4">.</span><span style="color:#d4d4d4">SetElevatorHeight</span><span style="color:#d4d4d4">;</span>
<span style="color:#679ad1">import</span> <span style="color:#d4d4d4">frc</span><span style="color:#d4d4d4">.</span><span style="color:#d4d4d4">robot</span><span style="color:#d4d4d4">.</span><span style="color:#d4d4d4">constants</span><span style="color:#d4d4d4">.</span><span style="color:#d4d4d4">AlgaeConstants</span><span style="color:#d4d4d4">;</span>
<span style="color:#679ad1">import</span> <span style="color:#d4d4d4">frc</span><span style="color:#d4d4d4">.</span><span style="color:#d4d4d4">robot</span><span style="color:#d4d4d4">.</span><span style="color:#d4d4d4">constants</span><span style="color:#d4d4d4">.</span><span style="color:#d4d4d4">CompositeConstants</span><span style="color:#d4d4d4">;</span>
<span style="color:#679ad1">import</span> <span style="color:#d4d4d4">frc</span><span style="color:#d4d4d4">.</span><span style="color:#d4d4d4">robot</span><span style="color:#d4d4d4">.</span><span style="color:#d4d4d4">constants</span><span style="color:#d4d4d4">.</span><span style="color:#d4d4d4">ElevatorConstants</span><span style="color:#d4d4d4">;</span>
<span style="color:#679ad1">import</span> <span style="color:#d4d4d4">frc</span><span style="color:#d4d4d4">.</span><span style="color:#d4d4d4">robot</span><span style="color:#d4d4d4">.</span><span style="color:#d4d4d4">hardware</span><span style="color:#d4d4d4">.</span><span style="color:#d4d4d4">AHRSGyro</span><span style="color:#d4d4d4">;</span>
<span style="color:#679ad1">import</span> <span style="color:#d4d4d4">frc</span><span style="color:#d4d4d4">.</span><span style="color:#d4d4d4">robot</span><span style="color:#d4d4d4">.</span><span style="color:#d4d4d4">subsystems</span><span style="color:#d4d4d4">.</span><span style="color:#d4d4d4">AlgaeSubsystem</span><span style="color:#d4d4d4">;</span>
<span style="color:#679ad1">import</span> <span style="color:#d4d4d4">frc</span><span style="color:#d4d4d4">.</span><span style="color:#d4d4d4">robot</span><span style="color:#d4d4d4">.</span><span style="color:#d4d4d4">subsystems</span><span style="color:#d4d4d4">.</span><span style="color:#d4d4d4">CoralSubsystem</span><span style="color:#d4d4d4">;</span>
<span style="color:#679ad1">import</span> <span style="color:#d4d4d4">frc</span><span style="color:#d4d4d4">.</span><span style="color:#d4d4d4">robot</span><span style="color:#d4d4d4">.</span><span style="color:#d4d4d4">subsystems</span><span style="color:#d4d4d4">.</span><span style="color:#d4d4d4">ElevatorSubsystem</span><span style="color:#d4d4d4">;</span>
<span style="color:#679ad1">import</span> <span style="color:#d4d4d4">frc</span><span style="color:#d4d4d4">.</span><span style="color:#d4d4d4">robot</span><span style="color:#d4d4d4">.</span><span style="color:#d4d4d4">subsystems</span><span style="color:#d4d4d4">.</span><span style="color:#d4d4d4">OdometrySubsystem</span><span style="color:#d4d4d4">;</span>
<span style="color:#679ad1">import</span> <span style="color:#d4d4d4">frc</span><span style="color:#d4d4d4">.</span><span style="color:#d4d4d4">robot</span><span style="color:#d4d4d4">.</span><span style="color:#d4d4d4">subsystems</span><span style="color:#d4d4d4">.</span><span style="color:#d4d4d4">SwerveSubsystem</span><span style="color:#d4d4d4">;</span>
<span style="color:#679ad1">import</span> <span style="color:#d4d4d4">frc</span><span style="color:#d4d4d4">.</span><span style="color:#d4d4d4">robot</span><span style="color:#d4d4d4">.</span><span style="color:#d4d4d4">subsystems</span><span style="color:#d4d4d4">.</span><span style="color:#d4d4d4">background</span><span style="color:#d4d4d4">.</span><span style="color:#d4d4d4">CameraView</span><span style="color:#d4d4d4">;</span>
<span style="color:#679ad1">import</span> <span style="color:#d4d4d4">frc</span><span style="color:#d4d4d4">.</span><span style="color:#d4d4d4">robot</span><span style="color:#d4d4d4">.</span><span style="color:#d4d4d4">subsystems</span><span style="color:#d4d4d4">.</span><span style="color:#d4d4d4">background</span><span style="color:#d4d4d4">.</span><span style="color:#d4d4d4">GlobalPosition</span><span style="color:#d4d4d4">;</span>
<span style="color:#679ad1">import</span> <span style="color:#d4d4d4">frc</span><span style="color:#d4d4d4">.</span><span style="color:#d4d4d4">robot</span><span style="color:#d4d4d4">.</span><span style="color:#d4d4d4">subsystems</span><span style="color:#d4d4d4">.</span><span style="color:#d4d4d4">background</span><span style="color:#d4d4d4">.</span><span style="color:#d4d4d4">PiState</span><span style="color:#d4d4d4">;</span>
<span style="color:#679ad1">import</span> <span style="color:#d4d4d4">frc</span><span style="color:#d4d4d4">.</span><span style="color:#d4d4d4">robot</span><span style="color:#d4d4d4">.</span><span style="color:#d4d4d4">subsystems</span><span style="color:#d4d4d4">.</span><span style="color:#d4d4d4">background</span><span style="color:#d4d4d4">.</span><span style="color:#d4d4d4">PublicationSubsystem</span><span style="color:#d4d4d4">;</span>
<span style="color:#679ad1">import</span> <span style="color:#d4d4d4">frc</span><span style="color:#d4d4d4">.</span><span style="color:#d4d4d4">robot</span><span style="color:#d4d4d4">.</span><span style="color:#d4d4d4">util</span><span style="color:#d4d4d4">.</span><span style="color:#d4d4d4">config</span><span style="color:#d4d4d4">.</span><span style="color:#d4d4d4">AlgaeElevatorConfig</span><span style="color:#d4d4d4">;</span>
<span style="color:#679ad1">import</span> <span style="color:#d4d4d4">frc</span><span style="color:#d4d4d4">.</span><span style="color:#d4d4d4">robot</span><span style="color:#d4d4d4">.</span><span style="color:#d4d4d4">util</span><span style="color:#d4d4d4">.</span><span style="color:#d4d4d4">controller</span><span style="color:#d4d4d4">.</span><span style="color:#d4d4d4">FlightModule</span><span style="color:#d4d4d4">;</span>
<span style="color:#679ad1">import</span> <span style="color:#d4d4d4">frc</span><span style="color:#d4d4d4">.</span><span style="color:#d4d4d4">robot</span><span style="color:#d4d4d4">.</span><span style="color:#d4d4d4">util</span><span style="color:#d4d4d4">.</span><span style="color:#d4d4d4">controller</span><span style="color:#d4d4d4">.</span><span style="color:#d4d4d4">FlightStick</span><span style="color:#d4d4d4">;</span>
<span style="color:#679ad1">import</span> <span style="color:#d4d4d4">frc</span><span style="color:#d4d4d4">.</span><span style="color:#d4d4d4">robot</span><span style="color:#d4d4d4">.</span><span style="color:#d4d4d4">util</span><span style="color:#d4d4d4">.</span><span style="color:#d4d4d4">controller</span><span style="color:#d4d4d4">.</span><span style="color:#d4d4d4">LogitechController</span><span style="color:#d4d4d4">;</span>
<span style="color:#679ad1">import</span> <span style="color:#d4d4d4">frc</span><span style="color:#d4d4d4">.</span><span style="color:#d4d4d4">robot</span><span style="color:#d4d4d4">.</span><span style="color:#d4d4d4">util</span><span style="color:#d4d4d4">.</span><span style="color:#d4d4d4">controller</span><span style="color:#d4d4d4">.</span><span style="color:#d4d4d4">OperatorPanel</span><span style="color:#d4d4d4">;</span>

<span style="color:#679ad1">public</span> <span style="color:#679ad1">class</span> <span style="color:#71c6b1">RobotContainer</span> <span style="color:#f9d849">{</span>

  <span style="color:#679ad1">final</span> <span style="color:#71c6b1">LogitechController</span> <span style="color:#6fbff9">m_controller</span> <span style="color:#d4d4d4">=</span> <span style="color:#bc89bd">new</span> <span style="color:#dcdcaf">LogitechController</span><span style="color:#cc76d1">(</span><span style="color:#969696">port</span><span style="color:#d4d4d4">:</span><span style="color:#bacdab">0</span><span style="color:#cc76d1">)</span><span style="color:#d4d4d4">;</span>
  <span style="color:#679ad1">final</span> <span style="color:#71c6b1">OperatorPanel</span> <span style="color:#6fbff9">m_operatorPanel</span> <span style="color:#d4d4d4">=</span> <span style="color:#bc89bd">new</span> <span style="color:#dcdcaf">OperatorPanel</span><span style="color:#cc76d1">(</span><span style="color:#969696">port</span><span style="color:#d4d4d4">:</span><span style="color:#bacdab">1</span><span style="color:#cc76d1">)</span><span style="color:#d4d4d4">;</span>
  <span style="color:#679ad1">final</span> <span style="color:#71c6b1">FlightStick</span> <span style="color:#6fbff9">m_leftFlightStick</span> <span style="color:#d4d4d4">=</span> <span style="color:#bc89bd">new</span> <span style="color:#dcdcaf">FlightStick</span><span style="color:#cc76d1">(</span><span style="color:#969696">port</span><span style="color:#d4d4d4">:</span><span style="color:#bacdab">2</span><span style="color:#cc76d1">)</span><span style="color:#d4d4d4">;</span>
  <span style="color:#679ad1">final</span> <span style="color:#71c6b1">FlightStick</span> <span style="color:#6fbff9">m_rightFlightStick</span> <span style="color:#d4d4d4">=</span> <span style="color:#bc89bd">new</span> <span style="color:#dcdcaf">FlightStick</span><span style="color:#cc76d1">(</span><span style="color:#969696">port</span><span style="color:#d4d4d4">:</span><span style="color:#bacdab">3</span><span style="color:#cc76d1">)</span><span style="color:#d4d4d4">;</span>
  <span style="color:#679ad1">final</span> <span style="color:#71c6b1">FlightModule</span> <span style="color:#6fbff9">m_flightModule</span> <span style="color:#d4d4d4">=</span> <span style="color:#bc89bd">new</span> <span style="color:#dcdcaf">FlightModule</span><span style="color:#cc76d1">(</span>
      <span style="color:#6fbff9">m_leftFlightStick</span><span style="color:#d4d4d4">,</span>
      <span style="color:#6fbff9">m_rightFlightStick</span><span style="color:#cc76d1">)</span><span style="color:#d4d4d4">;</span>
  <span style="color:#679ad1">final</span> <span style="color:#71c6b1">SwerveMoveTeleop</span> <span style="color:#6fbff9">m_moveCommand</span><span style="color:#d4d4d4">;</span>

  <span style="color:#679ad1">public</span> <span style="color:#dcdcaf">RobotContainer</span><span style="color:#cc76d1">(</span><span style="color:#cc76d1">)</span> <span style="color:#cc76d1">{</span>
    <span style="color:#71c6b1">OdometrySubsystem</span><span style="color:#d4d4d4">.</span><span style="color:#dcdcaf">GetInstance</span><span style="color:#4a9df8">(</span><span style="color:#4a9df8">)</span><span style="color:#d4d4d4">;</span>
    <span style="color:#71c6b1">CoralSubsystem</span><span style="color:#d4d4d4">.</span><span style="color:#dcdcaf">GetInstance</span><span style="color:#4a9df8">(</span><span style="color:#4a9df8">)</span><span style="color:#d4d4d4">;</span>
    <span style="color:#71c6b1">AHRSGyro</span><span style="color:#d4d4d4">.</span><span style="color:#dcdcaf">GetInstance</span><span style="color:#4a9df8">(</span><span style="color:#4a9df8">)</span><span style="color:#d4d4d4">;</span>
    <span style="color:#71c6b1">SwerveSubsystem</span><span style="color:#d4d4d4">.</span><span style="color:#dcdcaf">GetInstance</span><span style="color:#4a9df8">(</span><span style="color:#4a9df8">)</span><span style="color:#d4d4d4">;</span>
    <span style="color:#71c6b1">AlgaeSubsystem</span><span style="color:#d4d4d4">.</span><span style="color:#dcdcaf">GetInstance</span><span style="color:#4a9df8">(</span><span style="color:#4a9df8">)</span><span style="color:#d4d4d4">;</span>
    <span style="color:#71c6b1">ElevatorSubsystem</span><span style="color:#d4d4d4">.</span><span style="color:#dcdcaf">GetInstance</span><span style="color:#4a9df8">(</span><span style="color:#4a9df8">)</span><span style="color:#d4d4d4">;</span>
    <span style="color:#71c6b1">PiState</span><span style="color:#d4d4d4">.</span><span style="color:#dcdcaf">GetInstance</span><span style="color:#4a9df8">(</span><span style="color:#4a9df8">)</span><span style="color:#d4d4d4">;</span>
    <span style="color:#71c6b1">CameraView</span><span style="color:#d4d4d4">.</span><span style="color:#dcdcaf">GetInstance</span><span style="color:#4a9df8">(</span><span style="color:#4a9df8">)</span><span style="color:#d4d4d4">;</span>
    <span style="color:#71c6b1">PublicationSubsystem</span><span style="color:#d4d4d4">.</span><span style="color:#dcdcaf">GetInstance</span><span style="color:#4a9df8">(</span><span style="color:#4a9df8">)</span><span style="color:#d4d4d4">;</span>

    <span style="color:#71c6b1">GlobalPosition</span><span style="color:#d4d4d4">.</span><span style="color:#dcdcaf">Initialize</span><span style="color:#4a9df8">(</span><span style="color:#4a9df8">)</span><span style="color:#d4d4d4">;</span>

    <span style="color:#679ad1">this</span><span style="color:#d4d4d4">.</span><span style="color:#6fbff9">m_moveCommand</span> <span style="color:#d4d4d4">=</span> <span style="color:#bc89bd">new</span> <span style="color:#dcdcaf">SwerveMoveTeleop</span><span style="color:#4a9df8">(</span><span style="color:#71c6b1">SwerveSubsystem</span><span style="color:#d4d4d4">.</span><span style="color:#dcdcaf">GetInstance</span><span style="color:#f9d849">(</span><span style="color:#f9d849">)</span><span style="color:#d4d4d4">,</span> <span style="color:#6fbff9">m_flightModule</span><span style="color:#4a9df8">)</span><span style="color:#d4d4d4">;</span>

    <span style="color:#dcdcaf">setAlgaeCommands</span><span style="color:#4a9df8">(</span><span style="color:#4a9df8">)</span><span style="color:#d4d4d4">;</span>
    <span style="color:#dcdcaf">setCoralCommands</span><span style="color:#4a9df8">(</span><span style="color:#4a9df8">)</span><span style="color:#d4d4d4">;</span>
    <span style="color:#dcdcaf">setElevatorCommands</span><span style="color:#4a9df8">(</span><span style="color:#4a9df8">)</span><span style="color:#d4d4d4">;</span>
    <span style="color:#dcdcaf">setSwerveCommands</span><span style="color:#4a9df8">(</span><span style="color:#4a9df8">)</span><span style="color:#d4d4d4">;</span>
    <span style="color:#dcdcaf">setCompositeCommands</span><span style="color:#4a9df8">(</span><span style="color:#4a9df8">)</span><span style="color:#d4d4d4">;</span>

    <span style="color:#71c6b1">PublicationSubsystem</span><span style="color:#d4d4d4">.</span><span style="color:#dcdcaf">addDataClasses</span><span style="color:#4a9df8">(</span><span style="color:#71c6b1">AHRSGyro</span><span style="color:#d4d4d4">.</span><span style="color:#dcdcaf">GetInstance</span><span style="color:#f9d849">(</span><span style="color:#f9d849">)</span><span style="color:#d4d4d4">,</span> <span style="color:#71c6b1">OdometrySubsystem</span><span style="color:#d4d4d4">.</span><span style="color:#dcdcaf">GetInstance</span><span style="color:#f9d849">(</span><span style="color:#f9d849">)</span><span style="color:#4a9df8">)</span><span style="color:#d4d4d4">;</span>
  <span style="color:#cc76d1">}</span>

  <span style="color:#679ad1">public</span> <span style="color:#71c6b1">void</span> <span style="color:#dcdcaf">setCompositeCommands</span><span style="color:#cc76d1">(</span><span style="color:#cc76d1">)</span> <span style="color:#cc76d1">{</span>
    <span style="color:#6fbff9">m_leftFlightStick</span>
        <span style="color:#d4d4d4">.</span><span style="color:#dcdcaf">A</span><span style="color:#4a9df8">(</span><span style="color:#4a9df8">)</span>
        <span style="color:#d4d4d4">.</span><span style="color:#dcdcaf">onTrue</span><span style="color:#4a9df8">(</span>
            <span style="color:#bc89bd">new</span> <span style="color:#dcdcaf">ElevatorAndCoral</span><span style="color:#f9d849">(</span>
                <span style="color:#71c6b1">ElevatorSubsystem</span><span style="color:#d4d4d4">.</span><span style="color:#dcdcaf">GetInstance</span><span style="color:#cc76d1">(</span><span style="color:#cc76d1">)</span><span style="color:#d4d4d4">,</span>
                <span style="color:#71c6b1">CoralSubsystem</span><span style="color:#d4d4d4">.</span><span style="color:#dcdcaf">GetInstance</span><span style="color:#cc76d1">(</span><span style="color:#cc76d1">)</span><span style="color:#d4d4d4">,</span>
                <span style="color:#71c6b1">CompositeConstants</span><span style="color:#d4d4d4">.</span><span style="color:#6fbff9">kL4</span><span style="color:#f9d849">)</span><span style="color:#4a9df8">)</span><span style="color:#d4d4d4">;</span>
    <span style="color:#6fbff9">m_leftFlightStick</span>
        <span style="color:#d4d4d4">.</span><span style="color:#dcdcaf">B</span><span style="color:#4a9df8">(</span><span style="color:#4a9df8">)</span>
        <span style="color:#d4d4d4">.</span><span style="color:#dcdcaf">onTrue</span><span style="color:#4a9df8">(</span>
            <span style="color:#bc89bd">new</span> <span style="color:#dcdcaf">ElevatorAndCoral</span><span style="color:#f9d849">(</span>
                <span style="color:#71c6b1">ElevatorSubsystem</span><span style="color:#d4d4d4">.</span><span style="color:#dcdcaf">GetInstance</span><span style="color:#cc76d1">(</span><span style="color:#cc76d1">)</span><span style="color:#d4d4d4">,</span>
                <span style="color:#71c6b1">CoralSubsystem</span><span style="color:#d4d4d4">.</span><span style="color:#dcdcaf">GetInstance</span><span style="color:#cc76d1">(</span><span style="color:#cc76d1">)</span><span style="color:#d4d4d4">,</span>
                <span style="color:#71c6b1">CompositeConstants</span><span style="color:#d4d4d4">.</span><span style="color:#6fbff9">kL3</span><span style="color:#f9d849">)</span><span style="color:#4a9df8">)</span><span style="color:#d4d4d4">;</span>
    <span style="color:#6fbff9">m_leftFlightStick</span>
        <span style="color:#d4d4d4">.</span><span style="color:#dcdcaf">X</span><span style="color:#4a9df8">(</span><span style="color:#4a9df8">)</span>
        <span style="color:#d4d4d4">.</span><span style="color:#dcdcaf">onTrue</span><span style="color:#4a9df8">(</span>
            <span style="color:#bc89bd">new</span> <span style="color:#dcdcaf">ElevatorAndCoral</span><span style="color:#f9d849">(</span>
                <span style="color:#71c6b1">ElevatorSubsystem</span><span style="color:#d4d4d4">.</span><span style="color:#dcdcaf">GetInstance</span><span style="color:#cc76d1">(</span><span style="color:#cc76d1">)</span><span style="color:#d4d4d4">,</span>
                <span style="color:#71c6b1">CoralSubsystem</span><span style="color:#d4d4d4">.</span><span style="color:#dcdcaf">GetInstance</span><span style="color:#cc76d1">(</span><span style="color:#cc76d1">)</span><span style="color:#d4d4d4">,</span>
                <span style="color:#71c6b1">CompositeConstants</span><span style="color:#d4d4d4">.</span><span style="color:#6fbff9">kL2</span><span style="color:#f9d849">)</span><span style="color:#4a9df8">)</span><span style="color:#d4d4d4">;</span>
    <span style="color:#6fbff9">m_leftFlightStick</span>
        <span style="color:#d4d4d4">.</span><span style="color:#dcdcaf">Y</span><span style="color:#4a9df8">(</span><span style="color:#4a9df8">)</span>
        <span style="color:#d4d4d4">.</span><span style="color:#dcdcaf">onTrue</span><span style="color:#4a9df8">(</span>
            <span style="color:#bc89bd">new</span> <span style="color:#dcdcaf">ElevatorAndAlgae</span><span style="color:#f9d849">(</span>
                <span style="color:#71c6b1">ElevatorSubsystem</span><span style="color:#d4d4d4">.</span><span style="color:#dcdcaf">GetInstance</span><span style="color:#cc76d1">(</span><span style="color:#cc76d1">)</span><span style="color:#d4d4d4">,</span>
                <span style="color:#71c6b1">AlgaeSubsystem</span><span style="color:#d4d4d4">.</span><span style="color:#dcdcaf">GetInstance</span><span style="color:#cc76d1">(</span><span style="color:#cc76d1">)</span><span style="color:#d4d4d4">,</span>
                <span style="color:#71c6b1">CompositeConstants</span><span style="color:#d4d4d4">.</span><span style="color:#6fbff9">kBottom</span><span style="color:#f9d849">)</span><span style="color:#4a9df8">)</span><span style="color:#d4d4d4">;</span>
    <span style="color:#6fbff9">m_rightFlightStick</span>
        <span style="color:#d4d4d4">.</span><span style="color:#dcdcaf">trigger</span><span style="color:#4a9df8">(</span><span style="color:#4a9df8">)</span>
        <span style="color:#d4d4d4">.</span><span style="color:#dcdcaf">whileTrue</span><span style="color:#4a9df8">(</span><span style="color:#bc89bd">new</span> <span style="color:#dcdcaf">ManualScore</span><span style="color:#f9d849">(</span><span style="color:#71c6b1">CoralSubsystem</span><span style="color:#d4d4d4">.</span><span style="color:#dcdcaf">GetInstance</span><span style="color:#cc76d1">(</span><span style="color:#cc76d1">)</span><span style="color:#d4d4d4">,</span> <span style="color:#71c6b1">ElevatorSubsystem</span><span style="color:#d4d4d4">.</span><span style="color:#dcdcaf">GetInstance</span><span style="color:#cc76d1">(</span><span style="color:#cc76d1">)</span><span style="color:#f9d849">)</span><span style="color:#4a9df8">)</span><span style="color:#d4d4d4">;</span>
  <span style="color:#cc76d1">}</span>

  <span style="color:#679ad1">public</span> <span style="color:#71c6b1">void</span> <span style="color:#dcdcaf">setElevatorCommands</span><span style="color:#cc76d1">(</span><span style="color:#cc76d1">)</span> <span style="color:#cc76d1">{</span>
  <span style="color:#cc76d1">}</span>

  <span style="color:#679ad1">public</span> <span style="color:#71c6b1">void</span> <span style="color:#dcdcaf">setCoralCommands</span><span style="color:#cc76d1">(</span><span style="color:#cc76d1">)</span> <span style="color:#cc76d1">{</span>
    <span style="color:#71c6b1">CoralSubsystem</span> <span style="color:#aadafa">coralSubsystem</span> <span style="color:#d4d4d4">=</span> <span style="color:#71c6b1">CoralSubsystem</span><span style="color:#d4d4d4">.</span><span style="color:#dcdcaf">GetInstance</span><span style="color:#4a9df8">(</span><span style="color:#4a9df8">)</span><span style="color:#d4d4d4">;</span>
    <span style="color:#6fbff9">m_leftFlightStick</span><span style="color:#d4d4d4">.</span><span style="color:#dcdcaf">trigger</span><span style="color:#4a9df8">(</span><span style="color:#4a9df8">)</span><span style="color:#d4d4d4">.</span><span style="color:#dcdcaf">whileTrue</span><span style="color:#4a9df8">(</span><span style="color:#bc89bd">new</span> <span style="color:#dcdcaf">CoralIntake</span><span style="color:#f9d849">(</span><span style="color:#aadafa">coralSubsystem</span><span style="color:#f9d849">)</span><span style="color:#4a9df8">)</span><span style="color:#d4d4d4">;</span>
    <span style="color:#6fbff9">m_rightFlightStick</span>
        <span style="color:#d4d4d4">.</span><span style="color:#dcdcaf">B5</span><span style="color:#4a9df8">(</span><span style="color:#4a9df8">)</span>
        <span style="color:#d4d4d4">.</span><span style="color:#dcdcaf">onTrue</span><span style="color:#4a9df8">(</span>
            <span style="color:#aadafa">coralSubsystem</span><span style="color:#d4d4d4">.</span><span style="color:#dcdcaf">runOnce</span><span style="color:#f9d849">(</span><span style="color:#cc76d1">(</span><span style="color:#cc76d1">)</span> <span style="color:#679ad1">-&gt;</span> <span style="color:#aadafa">coralSubsystem</span><span style="color:#d4d4d4">.</span><span style="color:#dcdcaf">calibrateWrist</span><span style="color:#cc76d1">(</span><span style="color:#cc76d1">)</span><span style="color:#f9d849">)</span><span style="color:#4a9df8">)</span><span style="color:#d4d4d4">;</span>
    <span style="color:#aadafa">coralSubsystem</span><span style="color:#d4d4d4">.</span><span style="color:#dcdcaf">setDefaultCommand</span><span style="color:#4a9df8">(</span><span style="color:#bc89bd">new</span> <span style="color:#dcdcaf">HoldCoral</span><span style="color:#f9d849">(</span><span style="color:#aadafa">coralSubsystem</span><span style="color:#f9d849">)</span><span style="color:#4a9df8">)</span><span style="color:#d4d4d4">;</span>
  <span style="color:#cc76d1">}</span>

  <span style="color:#679ad1">public</span> <span style="color:#71c6b1">void</span> <span style="color:#dcdcaf">setAlgaeCommands</span><span style="color:#cc76d1">(</span><span style="color:#cc76d1">)</span> <span style="color:#cc76d1">{</span>
    <span style="color:#71c6b1">AlgaeSubsystem</span> <span style="color:#aadafa">algaeSubsystem</span> <span style="color:#d4d4d4">=</span> <span style="color:#71c6b1">AlgaeSubsystem</span><span style="color:#d4d4d4">.</span><span style="color:#dcdcaf">GetInstance</span><span style="color:#4a9df8">(</span><span style="color:#4a9df8">)</span><span style="color:#d4d4d4">;</span>
    <span style="color:#71c6b1">ElevatorSubsystem</span> <span style="color:#aadafa">elevatorSubsystem</span> <span style="color:#d4d4d4">=</span> <span style="color:#71c6b1">ElevatorSubsystem</span><span style="color:#d4d4d4">.</span><span style="color:#dcdcaf">GetInstance</span><span style="color:#4a9df8">(</span><span style="color:#4a9df8">)</span><span style="color:#d4d4d4">;</span>
    <span style="color:#6fbff9">m_rightFlightStick</span><span style="color:#d4d4d4">.</span><span style="color:#dcdcaf">B16</span><span style="color:#4a9df8">(</span><span style="color:#4a9df8">)</span><span style="color:#d4d4d4">.</span><span style="color:#dcdcaf">whileTrue</span><span style="color:#4a9df8">(</span><span style="color:#bc89bd">new</span> <span style="color:#dcdcaf">AlgaeIntake</span><span style="color:#f9d849">(</span><span style="color:#aadafa">algaeSubsystem</span><span style="color:#f9d849">)</span><span style="color:#4a9df8">)</span><span style="color:#d4d4d4">;</span>
    <span style="color:#6fbff9">m_rightFlightStick</span><span style="color:#d4d4d4">.</span><span style="color:#dcdcaf">B17</span><span style="color:#4a9df8">(</span><span style="color:#4a9df8">)</span><span style="color:#d4d4d4">.</span><span style="color:#dcdcaf">whileTrue</span><span style="color:#4a9df8">(</span><span style="color:#bc89bd">new</span> <span style="color:#dcdcaf">AlgaeEject</span><span style="color:#f9d849">(</span><span style="color:#aadafa">algaeSubsystem</span><span style="color:#f9d849">)</span><span style="color:#4a9df8">)</span><span style="color:#d4d4d4">;</span>
    <span style="color:#6fbff9">m_operatorPanel</span>
        <span style="color:#d4d4d4">.</span><span style="color:#dcdcaf">blackButton</span><span style="color:#4a9df8">(</span><span style="color:#4a9df8">)</span>
        <span style="color:#d4d4d4">.</span><span style="color:#dcdcaf">onTrue</span><span style="color:#4a9df8">(</span>
            <span style="color:#bc89bd">new</span> <span style="color:#dcdcaf">ElevatorAndAlgae</span><span style="color:#f9d849">(</span>
                <span style="color:#aadafa">elevatorSubsystem</span><span style="color:#d4d4d4">,</span>
                <span style="color:#aadafa">algaeSubsystem</span><span style="color:#d4d4d4">,</span>
                <span style="color:#71c6b1">CompositeConstants</span><span style="color:#d4d4d4">.</span><span style="color:#6fbff9">kHighAlgae</span><span style="color:#f9d849">)</span><span style="color:#4a9df8">)</span><span style="color:#d4d4d4">;</span>
    <span style="color:#6fbff9">m_operatorPanel</span>
        <span style="color:#d4d4d4">.</span><span style="color:#dcdcaf">redButton</span><span style="color:#4a9df8">(</span><span style="color:#4a9df8">)</span>
        <span style="color:#d4d4d4">.</span><span style="color:#dcdcaf">onTrue</span><span style="color:#4a9df8">(</span>
            <span style="color:#bc89bd">new</span> <span style="color:#dcdcaf">ElevatorAndAlgae</span><span style="color:#f9d849">(</span>
                <span style="color:#aadafa">elevatorSubsystem</span><span style="color:#d4d4d4">,</span>
                <span style="color:#aadafa">algaeSubsystem</span><span style="color:#d4d4d4">,</span>
                <span style="color:#71c6b1">CompositeConstants</span><span style="color:#d4d4d4">.</span><span style="color:#6fbff9">kMidAlgae</span><span style="color:#f9d849">)</span><span style="color:#4a9df8">)</span><span style="color:#d4d4d4">;</span>
    <span style="color:#6fbff9">m_operatorPanel</span>
        <span style="color:#d4d4d4">.</span><span style="color:#dcdcaf">greenButton</span><span style="color:#4a9df8">(</span><span style="color:#4a9df8">)</span>
        <span style="color:#d4d4d4">.</span><span style="color:#dcdcaf">onTrue</span><span style="color:#4a9df8">(</span>
            <span style="color:#bc89bd">new</span> <span style="color:#dcdcaf">SetElevatorHeight</span><span style="color:#f9d849">(</span>
                <span style="color:#aadafa">elevatorSubsystem</span><span style="color:#d4d4d4">,</span>
                <span style="color:#71c6b1">ElevatorConstants</span><span style="color:#d4d4d4">.</span><span style="color:#6fbff9">kProcessorHeight</span><span style="color:#d4d4d4">,</span>
                <span style="color:#969696">waitUntilReach</span><span style="color:#d4d4d4">:</span><span style="color:#679ad1">false</span><span style="color:#f9d849">)</span><span style="color:#4a9df8">)</span><span style="color:#d4d4d4">;</span>
    <span style="color:#6fbff9">m_operatorPanel</span>
        <span style="color:#d4d4d4">.</span><span style="color:#dcdcaf">metalSwitchDown</span><span style="color:#4a9df8">(</span><span style="color:#4a9df8">)</span>
        <span style="color:#d4d4d4">.</span><span style="color:#dcdcaf">onTrue</span><span style="color:#4a9df8">(</span>
            <span style="color:#bc89bd">new</span> <span style="color:#dcdcaf">ElevatorAndAlgae</span><span style="color:#f9d849">(</span>
                <span style="color:#aadafa">elevatorSubsystem</span><span style="color:#d4d4d4">,</span>
                <span style="color:#aadafa">algaeSubsystem</span><span style="color:#d4d4d4">,</span>
                <span style="color:#bc89bd">new</span> <span style="color:#dcdcaf">AlgaeElevatorConfig</span><span style="color:#cc76d1">(</span>
                    <span style="color:#71c6b1">ElevatorConstants</span><span style="color:#d4d4d4">.</span><span style="color:#6fbff9">kRestingHeight</span><span style="color:#d4d4d4">,</span>
                    <span style="color:#71c6b1">AlgaeConstants</span><span style="color:#d4d4d4">.</span><span style="color:#6fbff9">kIntakeAngle</span><span style="color:#cc76d1">)</span><span style="color:#f9d849">)</span><span style="color:#4a9df8">)</span><span style="color:#d4d4d4">;</span>

    <span style="color:#aadafa">algaeSubsystem</span><span style="color:#d4d4d4">.</span><span style="color:#dcdcaf">setDefaultCommand</span><span style="color:#4a9df8">(</span><span style="color:#bc89bd">new</span> <span style="color:#dcdcaf">HoldAlgae</span><span style="color:#f9d849">(</span><span style="color:#aadafa">algaeSubsystem</span><span style="color:#f9d849">)</span><span style="color:#4a9df8">)</span><span style="color:#d4d4d4">;</span>
  <span style="color:#cc76d1">}</span>

  <span style="color:#679ad1">public</span> <span style="color:#71c6b1">void</span> <span style="color:#dcdcaf">setSwerveCommands</span><span style="color:#cc76d1">(</span><span style="color:#cc76d1">)</span> <span style="color:#cc76d1">{</span>
    <span style="color:#71c6b1">SwerveSubsystem</span> <span style="color:#aadafa">swerveSubsystem</span> <span style="color:#d4d4d4">=</span> <span style="color:#71c6b1">SwerveSubsystem</span><span style="color:#d4d4d4">.</span><span style="color:#dcdcaf">GetInstance</span><span style="color:#4a9df8">(</span><span style="color:#4a9df8">)</span><span style="color:#d4d4d4">;</span>

    <span style="color:#aadafa">swerveSubsystem</span><span style="color:#d4d4d4">.</span><span style="color:#dcdcaf">setDefaultCommand</span><span style="color:#4a9df8">(</span><span style="color:#6fbff9">m_moveCommand</span><span style="color:#4a9df8">)</span><span style="color:#d4d4d4">;</span>
    <span style="color:#6fbff9">m_rightFlightStick</span>
        <span style="color:#d4d4d4">.</span><span style="color:#dcdcaf">B5</span><span style="color:#4a9df8">(</span><span style="color:#4a9df8">)</span>
        <span style="color:#d4d4d4">.</span><span style="color:#dcdcaf">onTrue</span><span style="color:#4a9df8">(</span><span style="color:#aadafa">swerveSubsystem</span><span style="color:#d4d4d4">.</span><span style="color:#dcdcaf">runOnce</span><span style="color:#f9d849">(</span><span style="color:#cc76d1">(</span><span style="color:#cc76d1">)</span> <span style="color:#679ad1">-&gt;</span> <span style="color:#aadafa">swerveSubsystem</span><span style="color:#d4d4d4">.</span><span style="color:#dcdcaf">resetGyro</span><span style="color:#cc76d1">(</span><span style="color:#969696">offset</span><span style="color:#d4d4d4">:</span><span style="color:#bacdab">180</span><span style="color:#cc76d1">)</span><span style="color:#f9d849">)</span><span style="color:#4a9df8">)</span><span style="color:#d4d4d4">;</span>
    <span style="color:#6fbff9">m_leftFlightStick</span>
        <span style="color:#d4d4d4">.</span><span style="color:#dcdcaf">screenshare</span><span style="color:#4a9df8">(</span><span style="color:#4a9df8">)</span>
        <span style="color:#d4d4d4">.</span><span style="color:#dcdcaf">onTrue</span><span style="color:#4a9df8">(</span><span style="color:#bc89bd">new</span> <span style="color:#dcdcaf">AlignReef</span><span style="color:#f9d849">(</span><span style="color:#aadafa">swerveSubsystem</span><span style="color:#d4d4d4">,</span> <span style="color:#6fbff9">m_moveCommand</span><span style="color:#f9d849">)</span><span style="color:#4a9df8">)</span><span style="color:#d4d4d4">;</span>
  <span style="color:#cc76d1">}</span>

  <span style="color:#679ad1">public</span> <span style="color:#71c6b1">void</span> <span style="color:#dcdcaf">onInit</span><span style="color:#cc76d1">(</span><span style="color:#cc76d1">)</span> <span style="color:#cc76d1">{</span>
    <span style="color:#71c6b1">CoralSubsystem</span><span style="color:#d4d4d4">.</span><span style="color:#dcdcaf">GetInstance</span><span style="color:#4a9df8">(</span><span style="color:#4a9df8">)</span><span style="color:#d4d4d4">.</span><span style="color:#dcdcaf">calibrateWrist</span><span style="color:#4a9df8">(</span><span style="color:#4a9df8">)</span><span style="color:#d4d4d4">;</span>
    <span style="color:#71c6b1">ElevatorSubsystem</span><span style="color:#d4d4d4">.</span><span style="color:#dcdcaf">GetInstance</span><span style="color:#4a9df8">(</span><span style="color:#4a9df8">)</span><span style="color:#d4d4d4">.</span><span style="color:#dcdcaf">resetIAccum</span><span style="color:#4a9df8">(</span><span style="color:#4a9df8">)</span><span style="color:#d4d4d4">;</span>
    <span style="color:#71c6b1">AlgaeSubsystem</span><span style="color:#d4d4d4">.</span><span style="color:#dcdcaf">GetInstance</span><span style="color:#4a9df8">(</span><span style="color:#4a9df8">)</span><span style="color:#d4d4d4">.</span><span style="color:#dcdcaf">calibrateWrist</span><span style="color:#4a9df8">(</span><span style="color:#4a9df8">)</span><span style="color:#d4d4d4">;</span>
  <span style="color:#cc76d1">}</span>

  <span style="color:#679ad1">public</span> <span style="color:#71c6b1">void</span> <span style="color:#dcdcaf">onPeriodic</span><span style="color:#cc76d1">(</span><span style="color:#cc76d1">)</span> <span style="color:#cc76d1">{</span>
    <span style="color:#6fbff9">m_flightModule</span><span style="color:#d4d4d4">.</span><span style="color:#dcdcaf">updateLog</span><span style="color:#4a9df8">(</span><span style="color:#4a9df8">)</span><span style="color:#d4d4d4">;</span>
  <span style="color:#cc76d1">}</span>
<span style="color:#f9d849">}</span></div>
<div style="position:absolute;left:3108.00px;top:260.00px;width:2.00px;height:1274.00px;background:#3a3a3a;"></div>
<div style="position:absolute;left:3108.00px;top:260.00px;width:28.00px;height:2.00px;background:#303030;"></div>
<div style="position:absolute;left:3110.00px;top:828.00px;width:26.00px;height:210.00px;background:#424242;"></div>
<div style="position:absolute;left:3110.00px;top:953.00px;width:26.00px;height:4.00px;background:#858585;"></div>
<div style="position:absolute;left:3127.00px;top:661.00px;width:9.00px;height:12.00px;background:#c0432f;"></div>
<div style="position:absolute;left:724.00px;top:1534.00px;width:2412.00px;height:386.00px;background:#1e1e1e;"></div>
<div style="position:absolute;left:724.00px;top:1533.50px;width:2412.00px;height:2.00px;background:#414141;"></div>
<div style="position:absolute;left:762.90px;top:1554.00px;height:33px;line-height:33px;font:400 22px/33px 'Liberation Sans',sans-serif;letter-spacing:-0.235px;color:#969696;white-space:pre;-webkit-text-stroke:0.22px;">PROBLEMS</div>
<div style="position:absolute;left:904px;top:1553px;width:61px;height:35px;border-radius:18px;background:#4d4d4d"></div>
<div style="position:absolute;left:913.29px;top:1553.50px;height:33px;line-height:33px;font:400 22px/33px 'Liberation Sans',sans-serif;letter-spacing:2.562px;color:#ffffff;white-space:pre;-webkit-text-stroke:0.22px;">265</div>
<div style="position:absolute;left:1008.16px;top:1554.00px;height:33px;line-height:33px;font:400 22px/33px 'Liberation Sans',sans-serif;letter-spacing:0.342px;color:#969696;white-space:pre;-webkit-text-stroke:0.22px;">OUTPUT</div>
<div style="position:absolute;left:1147.90px;top:1554.00px;height:33px;line-height:33px;font:400 22px/33px 'Liberation Sans',sans-serif;letter-spacing:-0.090px;color:#969696;white-space:pre;-webkit-text-stroke:0.22px;">DEBUG CONSOLE</div>
<div style="position:absolute;left:1387.21px;top:1554.00px;height:33px;line-height:33px;font:400 22px/33px 'Liberation Sans',sans-serif;letter-spacing:-0.130px;color:#e7e7e7;white-space:pre;-webkit-text-stroke:0.22px;">TERMINAL</div>
<div style="position:absolute;left:1383.00px;top:1591.00px;width:119.00px;height:2.00px;background:#e7e7e7;"></div>
<div style="position:absolute;left:1544.90px;top:1554.00px;height:33px;line-height:33px;font:400 22px/33px 'Liberation Sans',sans-serif;letter-spacing:0.006px;color:#969696;white-space:pre;-webkit-text-stroke:0.22px;">PORTS</div>
<div style="position:absolute;left:1668.26px;top:1554.00px;height:33px;line-height:33px;font:400 22px/33px 'Liberation Sans',sans-serif;letter-spacing:-0.029px;color:#969696;white-space:pre;-webkit-text-stroke:0.22px;">AUGMENT NEXT EDIT</div>
<svg style="position:absolute;left:2839.00px;top:1554.00px;overflow:visible;" width="32.00" height="32.00" viewBox="0 0 16 16" fill="none"><path d="M8 2.6 V13.4 M2.6 8 H13.4" stroke="#c5c5c5" stroke-width="1.15" stroke-linecap="square" stroke-linejoin="miter" fill="none" /></svg>
<svg style="position:absolute;left:2876.00px;top:1559.00px;overflow:visible;" width="24.00" height="24.00" viewBox="0 0 16 16" fill="none"><path d="M3.6 5.9 L8 10.3 L12.4 5.9" stroke="#c5c5c5" stroke-width="1.3" stroke-linecap="square" stroke-linejoin="miter" fill="none" /></svg>
<svg style="position:absolute;left:2917.50px;top:1555.00px;overflow:visible;" width="32.00" height="32.00" viewBox="0 0 16 16" fill="none"><path d="M5.84 2.93 A5.7 5.7 0 1 1 2.75 6.62" stroke="#c5c5c5" stroke-width="1.15" fill="none"/><path d="M2.6 2.93 H5.84 V6.4" stroke="#c5c5c5" stroke-width="1.15" fill="none"/></svg>
<svg style="position:absolute;left:2970.00px;top:1554.50px;overflow:visible;" width="32.00" height="32.00" viewBox="0 0 16 16" fill="none"><circle cx="3" cy="8" r="1.15" fill="#c5c5c5"/><circle cx="8" cy="8" r="1.15" fill="#c5c5c5"/><circle cx="13" cy="8" r="1.15" fill="#c5c5c5"/></svg>
<svg style="position:absolute;left:3022.00px;top:1554.00px;overflow:visible;" width="32.00" height="32.00" viewBox="0 0 16 16" fill="none"><path d="M3.6 10.1 L8 5.7 L12.4 10.1" stroke="#c5c5c5" stroke-width="1.15" stroke-linecap="square" stroke-linejoin="miter" fill="none" /></svg>
<svg style="position:absolute;left:3076.50px;top:1556.50px;overflow:visible;" width="27.00" height="27.00" viewBox="0 0 16 16" fill="none"><path d="M3.4 3.4 L12.6 12.6 M12.6 3.4 L3.4 12.6" stroke="#c5c5c5" stroke-width="1.35" stroke-linecap="square" stroke-linejoin="miter" fill="none" /></svg>
<div style="position:absolute;left:763.6px;top:1611.5px;font:400 24px/28px 'DejaVu Sans Mono','Liberation Mono',monospace;white-space:pre;letter-spacing:-0.449px;-webkit-text-stroke:0.3px;color:#56b97f;font-weight:400">#                                                           #</div>
<div style="position:absolute;left:763.6px;top:1639.5px;font:400 24px/28px 'DejaVu Sans Mono','Liberation Mono',monospace;white-space:pre;letter-spacing:-0.449px;-webkit-text-stroke:0.3px;color:#56b97f;font-weight:400">#                BUILT DYNAMIC DEPENDENCIES!                #</div>
<div style="position:absolute;left:763.6px;top:1667.5px;font:400 24px/28px 'DejaVu Sans Mono','Liberation Mono',monospace;white-space:pre;letter-spacing:-0.449px;-webkit-text-stroke:0.3px;color:#56b97f;font-weight:400">#                                                           #</div>
<div style="position:absolute;left:763.6px;top:1695.5px;font:400 24px/28px 'DejaVu Sans Mono','Liberation Mono',monospace;white-space:pre;letter-spacing:-0.449px;-webkit-text-stroke:0.3px;color:#56b97f;font-weight:400">#############################################################</div>
<div style="position:absolute;left:763.6px;top:1751.5px;font:400 24px/28px 'DejaVu Sans Mono','Liberation Mono',monospace;white-space:pre;letter-spacing:-0.449px;-webkit-text-stroke:0.3px;color:#cccccc;font-weight:400">Failed to generate config: Process &#x27;command &#x27;npm&#x27;&#x27; finished with non-zero exit value 1</div>
<div style="position:absolute;left:763.6px;top:1779.5px;font:400 24px/28px 'DejaVu Sans Mono','Liberation Mono',monospace;white-space:pre;letter-spacing:-0.449px;-webkit-text-stroke:0.3px;color:#cccccc;font-weight:400">Error Output:</div>
<div style="position:absolute;left:763.6px;top:1835.5px;font:400 24px/28px 'DejaVu Sans Mono','Liberation Mono',monospace;white-space:pre;letter-spacing:-0.449px;-webkit-text-stroke:0.3px;color:#e5e5e5;font-weight:700">&lt;-------------&gt; 0% EXECUTING [13s]</div>
<div style="position:absolute;left:763.6px;top:1863.5px;font:400 24px/28px 'DejaVu Sans Mono','Liberation Mono',monospace;white-space:pre;letter-spacing:-0.449px;-webkit-text-stroke:0.3px;color:#cccccc;font-weight:400">&gt; IDLE</div>
<div style="position:absolute;left:764.5px;top:1892.5px;width:13px;height:27px;box-sizing:border-box;border:2px solid #cccccc"></div>
<div style="position:absolute;left:2868.00px;top:1612.00px;width:2.00px;height:308.00px;background:#333333;"></div>
<div style="position:absolute;left:2896.00px;top:1604.00px;width:2.00px;height:316.00px;background:#3c3c3c;"></div>
<div style="position:absolute;left:2868.00px;top:1612.00px;width:28.00px;height:2.00px;background:#333333;"></div>
<div style="position:absolute;left:2869.00px;top:1612.00px;width:10.00px;height:6.00px;background:#5a5a5a;"></div>
<div style="position:absolute;left:2869.00px;top:1880.00px;width:27.00px;height:40.00px;background:#424242;"></div>
<div style="position:absolute;left:2898.00px;top:1648.00px;width:238.00px;height:44.00px;background:#37373d;"></div>
<svg style="position:absolute;left:2919.00px;top:1610.50px;overflow:visible;" width="30.00" height="30.00" viewBox="0 0 16 16" fill="none"><rect x="1.3" y="0.9" width="13.4" height="13.8" rx="1.2" stroke="#cccccc" stroke-width="1.1" fill="none"/><path d="M4.4 5 L7.6 8 L4.4 11 M8.6 11.2 H11.6" stroke="#cccccc" stroke-width="1.1" fill="none"/></svg>
<div style="position:absolute;left:2957.46px;top:1607.00px;height:39px;line-height:39px;font:700 26px/39px 'Liberation Sans',sans-serif;letter-spacing:-0.344px;color:#c6a837;white-space:pre;-webkit-text-stroke:0.1px;">zsh</div>
<svg style="position:absolute;left:3084.00px;top:1609.00px;overflow:visible;" width="32.00" height="32.00" viewBox="0 0 16 16" fill="none"><path d="M8 1.8 L14.6 13.6 H1.4 Z" stroke="#c6a837" stroke-width="1.15" fill="none" stroke-linejoin="round"/><path d="M8 6 V10" stroke="#c6a837" stroke-width="1.3"/><circle cx="8" cy="11.8" r="0.75" fill="#c6a837"/></svg>
<svg style="position:absolute;left:2918.00px;top:1654.00px;overflow:visible;" width="32.00" height="32.00" viewBox="0 0 16 16" fill="none"><path d="M2.6 14.2 L1.8 13.4 L8.2 7 A3 3 0 0 1 12 2.2 L10.2 4 L10.6 5.4 L12 5.8 L13.8 4 A3 3 0 0 1 9 7.8 Z" stroke="#cccccc" stroke-width="1.1" stroke-linecap="square" stroke-linejoin="miter" fill="none" stroke-linejoin="round"/><path d="M1.8 1.8 L4.2 2.8 L4.8 4.6 L6.8 6.6 M9.4 9.2 L14 13.2 Q14.4 14.6 13 14.2 L8.8 9.8 M1.8 1.8 L2.8 4.2 L4.6 4.8 M5.8 5.8 L7.2 7.2" stroke="#cccccc" stroke-width="1.1" stroke-linecap="square" stroke-linejoin="miter" fill="none" stroke-linejoin="round"/></svg>
<div style="position:absolute;left:2958.09px;top:1651.00px;height:39px;line-height:39px;font:400 26px/39px 'Liberation Sans',sans-serif;letter-spacing:-0.093px;color:#cccccc;white-space:pre;-webkit-text-stroke:0.22px;">Java Bu...</div>
<svg style="position:absolute;left:3084.00px;top:1654.00px;overflow:visible;" width="32.00" height="32.00" viewBox="0 0 16 16" fill="none"><path d="M1.6 8.4 A6.6 6.6 0 0 1 14.4 8.4" stroke="#cccccc" stroke-width="1.15" fill="none"/></svg>
<div style="position:absolute;left:112.00px;top:1920.00px;width:3024.00px;height:44.00px;background:#3478c6;"></div>
<div style="position:absolute;left:112.00px;top:1920.00px;width:68.00px;height:44.00px;background:#3d8060;"></div>
<svg style="position:absolute;left:130.00px;top:1926.00px;overflow:visible;" width="32.00" height="32.00" viewBox="0 0 16 16" fill="none"><path d="M4 5.85 L7.6 9.5 L4 13.35 M11.85 2.25 L8.4 5.85 L11.85 9.6" stroke="#ffffff" stroke-width="1.1" stroke-linecap="square" stroke-linejoin="miter" fill="none" /></svg>
<svg style="position:absolute;left:191.00px;top:1928.50px;overflow:visible;" width="28.00" height="28.00" viewBox="0 0 16 16" fill="none"><circle cx="5" cy="2.2" r="1.85" stroke="#ffffff" stroke-width="1.1" stroke-linecap="square" stroke-linejoin="miter" fill="none" /><circle cx="5" cy="13.25" r="1.85" stroke="#ffffff" stroke-width="1.1" stroke-linecap="square" stroke-linejoin="miter" fill="none" /><circle cx="12.05" cy="5.25" r="1.85" stroke="#ffffff" stroke-width="1.1" stroke-linecap="square" stroke-linejoin="miter" fill="none" /><path d="M5 4.05 V11.4 M12.05 7.1 Q12 9.2 9.6 9.3 H7.6 Q5.2 9.4 5 11.2" stroke="#ffffff" stroke-width="1.1" stroke-linecap="square" stroke-linejoin="miter" fill="none" /></svg>
<div style="position:absolute;left:225.98px;top:1924.50px;height:36px;line-height:36px;font:400 24px/36px 'Liberation Sans',sans-serif;letter-spacing:1.105px;color:#ffffff;white-space:pre;-webkit-text-stroke:0.22px;">cal-games*</div>
<svg style="position:absolute;left:369.00px;top:1928.50px;overflow:visible;" width="28.00" height="28.00" viewBox="0 0 16 16" fill="none"><path d="M3.6 6.6 A4.6 4.6 0 0 1 12.5 7 M12.4 9.4 A4.6 4.6 0 0 1 3.5 9" stroke="#ffffff" stroke-width="1.1" stroke-linecap="square" stroke-linejoin="miter" fill="none" /><path d="M10.5 6 L12.7 7.7 L14.3 5.4 M5.5 10 L3.3 8.3 L1.7 10.6" stroke="#ffffff" stroke-width="1.1" stroke-linecap="square" stroke-linejoin="miter" fill="none" /></svg>
<svg style="position:absolute;left:425.00px;top:1928.50px;overflow:visible;" width="28.00" height="28.00" viewBox="0 0 16 16" fill="none"><circle cx="8" cy="8" r="6.2" stroke="#ffffff" stroke-width="1.05" stroke-linecap="square" stroke-linejoin="miter" fill="none" /><path d="M5.6 5.6 L10.4 10.4 M10.4 5.6 L5.6 10.4" stroke="#ffffff" stroke-width="1.05" stroke-linecap="square" stroke-linejoin="miter" fill="none" /></svg>
<div style="position:absolute;left:460.19px;top:1924.50px;height:36px;line-height:36px;font:400 24px/36px 'Liberation Sans',sans-serif;letter-spacing:2.609px;color:#ffffff;white-space:pre;-webkit-text-stroke:0.22px;">256</div>
<svg style="position:absolute;left:511.70px;top:1928.50px;overflow:visible;" width="28.00" height="28.00" viewBox="0 0 16 16" fill="none"><path d="M8 2.2 L14.2 13.2 H1.8 Z" stroke="#ffffff" stroke-width="1.05" stroke-linecap="square" stroke-linejoin="miter" fill="none" stroke-linejoin="round"/><path d="M8 6.4 V9.8" stroke="#ffffff" stroke-width="1.1500000000000001" stroke-linecap="square" stroke-linejoin="miter" fill="none" /><circle cx="8" cy="11.5" r="0.7" fill="#ffffff"/></svg>
<div style="position:absolute;left:546.77px;top:1924.50px;height:36px;line-height:36px;font:400 24px/36px 'Liberation Sans',sans-serif;letter-spacing:1.090px;color:#ffffff;white-space:pre;-webkit-text-stroke:0.22px;">7</div>
<svg style="position:absolute;left:568.50px;top:1928.50px;overflow:visible;" width="28.00" height="28.00" viewBox="0 0 16 16" fill="none"><circle cx="8" cy="8" r="6.2" stroke="#ffffff" stroke-width="1.05" stroke-linecap="square" stroke-linejoin="miter" fill="none" /><path d="M8 7.2 V11.2" stroke="#ffffff" stroke-width="1.2" stroke-linecap="square" stroke-linejoin="miter" fill="none" /><circle cx="8" cy="5" r="0.8" fill="#ffffff"/></svg>
<div style="position:absolute;left:603.79px;top:1924.50px;height:36px;line-height:36px;font:400 24px/36px 'Liberation Sans',sans-serif;letter-spacing:1.066px;color:#ffffff;white-space:pre;-webkit-text-stroke:0.22px;">2</div>
<svg style="position:absolute;left:650.00px;top:1928.50px;overflow:visible;" width="28.00" height="28.00" viewBox="0 0 16 16" fill="none"><path d="M2.6 14.2 L1.8 13.4 L8.2 7 A3 3 0 0 1 12 2.2 L10.2 4 L10.6 5.4 L12 5.8 L13.8 4 A3 3 0 0 1 9 7.8 Z" stroke="#ffffff" stroke-width="1.0" stroke-linecap="square" stroke-linejoin="miter" fill="none" stroke-linejoin="round"/><path d="M1.8 1.8 L4.2 2.8 L4.8 4.6 L6.8 6.6 M9.4 9.2 L14 13.2 Q14.4 14.6 13 14.2 L8.8 9.8 M1.8 1.8 L2.8 4.2 L4.6 4.8 M5.8 5.8 L7.2 7.2" stroke="#ffffff" stroke-width="1.0" stroke-linecap="square" stroke-linejoin="miter" fill="none" stroke-linejoin="round"/></svg>
<div style="position:absolute;left:687.67px;top:1924.50px;height:36px;line-height:36px;font:400 24px/36px 'Liberation Sans',sans-serif;letter-spacing:-2.848px;color:#ffffff;white-space:pre;-webkit-text-stroke:0.22px;">1</div>
<svg style="position:absolute;left:733.00px;top:1928.50px;overflow:visible;" width="28.00" height="28.00" viewBox="0 0 16 16" fill="none"><path d="M8 6.4 L5 14 M8 6.4 L11 14 M6.2 11.4 H9.8" stroke="#ffffff" stroke-width="1.05" stroke-linecap="square" stroke-linejoin="miter" fill="none" /><circle cx="8" cy="5.6" r="1.1" fill="#ffffff"/><path d="M4.9 8.6 A4.3 4.3 0 0 1 4.9 2.6 M11.1 2.6 A4.3 4.3 0 0 1 11.1 8.6 M2.9 10.4 A7 7 0 0 1 2.9 0.9 M13.1 0.9 A7 7 0 0 1 13.1 10.4" stroke="#ffffff" stroke-width="1.05" stroke-linecap="square" stroke-linejoin="miter" fill="none" /></svg>
<div style="position:absolute;left:767.56px;top:1924.50px;height:36px;line-height:36px;font:400 24px/36px 'Liberation Sans',sans-serif;letter-spacing:1.027px;color:#ffffff;white-space:pre;-webkit-text-stroke:0.22px;">0</div>
<svg style="position:absolute;left:813.00px;top:1928.50px;overflow:visible;" width="28.00" height="28.00" viewBox="0 0 16 16" fill="none"><path d="M1.4 9.8 Q2 4.6 9.4 4.4 V1.6 L14.8 6.2 L9.4 10.8 V8 Q4.4 7.8 1.4 9.8 Z" stroke="#ffffff" stroke-width="1.05" stroke-linecap="square" stroke-linejoin="miter" fill="none" stroke-linejoin="round"/><circle cx="7" cy="12.6" r="2" stroke="#ffffff" stroke-width="1.05" stroke-linecap="square" stroke-linejoin="miter" fill="none" /></svg>
<div style="position:absolute;left:847.73px;top:1924.50px;height:36px;line-height:36px;font:400 24px/36px 'Liberation Sans',sans-serif;letter-spacing:0.477px;color:#ffffff;white-space:pre;-webkit-text-stroke:0.22px;">Live Share</div>
<svg style="position:absolute;left:998.80px;top:1928.50px;overflow:visible;" width="28.00" height="28.00" viewBox="0 0 16 16" fill="none"><path d="M3 4.4 A6.2 6.2 0 1 1 1.9 9" stroke="#ffffff" stroke-width="1.05" stroke-linecap="square" stroke-linejoin="miter" fill="none" /><path d="M2.8 1.6 V4.8 H6 M8 4.6 V8.4 L10.6 10.2" stroke="#ffffff" stroke-width="1.05" stroke-linecap="square" stroke-linejoin="miter" fill="none" /></svg>
<div style="position:absolute;left:1033.67px;top:1924.50px;height:36px;line-height:36px;font:400 24px/36px 'Liberation Sans',sans-serif;letter-spacing:2.411px;color:#ffffff;white-space:pre;-webkit-text-stroke:0.22px;">12m</div>
<div style="position:absolute;left:1115.79px;top:1924.50px;height:36px;line-height:36px;font:400 24px/36px 'Liberation Sans',sans-serif;letter-spacing:0.816px;color:#ffffff;white-space:pre;-webkit-text-stroke:0.22px;">Git Graph</div>
<svg style="position:absolute;left:1257.50px;top:1928.50px;overflow:visible;" width="28.00" height="28.00" viewBox="0 0 16 16" fill="none"><path d="M2.4 6.6 H11.4 V10.4 Q11.4 13.4 8.4 13.4 H5.4 Q2.4 13.4 2.4 10.4 Z M11.4 7.4 H13 Q14.4 7.4 14.4 8.8 Q14.4 10.4 13 10.4 H11.4" stroke="#ffffff" stroke-width="1.05" stroke-linecap="square" stroke-linejoin="miter" fill="none" stroke-linejoin="round"/><path d="M3.6 1.8 L5 4.6 M6.2 1.8 L7.6 4.6 M8.8 1.8 L10.2 4.6" stroke="#ffffff" stroke-width="1.05" stroke-linecap="square" stroke-linejoin="miter" fill="none" /></svg>
<div style="position:absolute;left:1292.33px;top:1924.50px;height:36px;line-height:36px;font:400 24px/36px 'Liberation Sans',sans-serif;letter-spacing:0.551px;color:#ffffff;white-space:pre;-webkit-text-stroke:0.22px;">Java: Warning</div>
<svg style="position:absolute;left:1482.00px;top:1928.50px;overflow:visible;" width="28.00" height="28.00" viewBox="0 0 16 16" fill="none"><path d="M8 2.2 L14.2 13.2 H1.8 Z" stroke="#ffffff" stroke-width="1.05" stroke-linecap="square" stroke-linejoin="miter" fill="none" stroke-linejoin="round"/><path d="M8 6.4 V9.8" stroke="#ffffff" stroke-width="1.1500000000000001" stroke-linecap="square" stroke-linejoin="miter" fill="none" /><circle cx="8" cy="11.5" r="0.7" fill="#ffffff"/></svg>
<div style="position:absolute;left:1516.19px;top:1924.50px;height:36px;line-height:36px;font:400 24px/36px 'Liberation Sans',sans-serif;letter-spacing:0.576px;color:#ffffff;white-space:pre;-webkit-text-stroke:0.22px;">Gradle: Build Error</div>
<div style="position:absolute;left:2172.93px;top:1924.50px;height:36px;line-height:36px;font:400 24px/36px 'Liberation Sans',sans-serif;letter-spacing:1.146px;color:#ffffff;white-space:pre;-webkit-text-stroke:0.22px;">Ln 118, Col 1</div>
<div style="position:absolute;left:2358.91px;top:1924.50px;height:36px;line-height:36px;font:400 24px/36px 'Liberation Sans',sans-serif;letter-spacing:0.757px;color:#ffffff;white-space:pre;-webkit-text-stroke:0.22px;">Spaces: 4</div>
<div style="position:absolute;left:2502.15px;top:1924.50px;height:36px;line-height:36px;font:400 24px/36px 'Liberation Sans',sans-serif;letter-spacing:1.726px;color:#ffffff;white-space:pre;-webkit-text-stroke:0.22px;">UTF-8</div>
<div style="position:absolute;left:2607.03px;top:1924.50px;height:36px;line-height:36px;font:400 24px/36px 'Liberation Sans',sans-serif;letter-spacing:0.922px;color:#ffffff;white-space:pre;-webkit-text-stroke:0.22px;">LF</div>
<div style="position:absolute;left:2667.20px;top:1923.50px;height:36px;line-height:36px;font:400 24px/36px 'Liberation Sans',sans-serif;letter-spacing:-0.084px;color:#ffffff;white-space:pre;-webkit-text-stroke:0.22px;">{ }</div>
<div style="position:absolute;left:2704.12px;top:1924.50px;height:36px;line-height:36px;font:400 24px/36px 'Liberation Sans',sans-serif;letter-spacing:0.060px;color:#ffffff;white-space:pre;-webkit-text-stroke:0.22px;">Java</div>
<div style="position:absolute;left:2784.39px;top:1924.50px;height:36px;line-height:36px;font:400 24px/36px 'Liberation Sans',sans-serif;letter-spacing:0.252px;color:#ffffff;white-space:pre;-webkit-text-stroke:0.22px;">WPILib</div>
<svg style="position:absolute;left:2895px;top:1928px" width="42" height="30" viewBox="0 0 42 30" fill="none" stroke="#fff" stroke-width="2.1"><path d="M15 1.6 H7.4 Q5.4 1.6 5.4 3.6 V11 Q5.4 14 1.6 15 Q5.4 16 5.4 19 V26.4 Q5.4 28.4 7.4 28.4 H15 M27 1.6 H34.6 Q36.6 1.6 36.6 3.6 V11 Q36.6 14 40.4 15 Q36.6 16 36.6 19 V26.4 Q36.6 28.4 34.6 28.4 H27"/><path d="M13.6 15.6 Q21 23.6 28.4 15.6"/><circle cx="15" cy="10.4" r="1.9" fill="#fff" stroke="none"/><circle cx="27" cy="10.4" r="1.9" fill="#fff" stroke="none"/></svg>
<div style="position:absolute;left:2944.95px;top:1924.50px;height:36px;line-height:36px;font:400 24px/36px 'Liberation Sans',sans-serif;letter-spacing:0.694px;color:#ffffff;white-space:pre;-webkit-text-stroke:0.22px;">Augment</div>
<svg style="position:absolute;left:3075.50px;top:1925.00px;overflow:visible;" width="33.00" height="33.00" viewBox="0 0 16 16" fill="none"><path d="M3.4 11.4 Q4.4 9.8 4.4 6.6 Q4.4 2.6 8 2.6 Q11.6 2.6 11.6 6.6 Q11.6 9.8 12.6 11.4 Z" stroke="#ffffff" stroke-width="1.05" stroke-linecap="square" stroke-linejoin="miter" fill="none" stroke-linejoin="round"/><path d="M6.6 12.8 Q8 14.4 9.4 12.8" stroke="#ffffff" stroke-width="1.05" stroke-linecap="square" stroke-linejoin="miter" fill="none" /></svg>
</div></div>
</body></html>
